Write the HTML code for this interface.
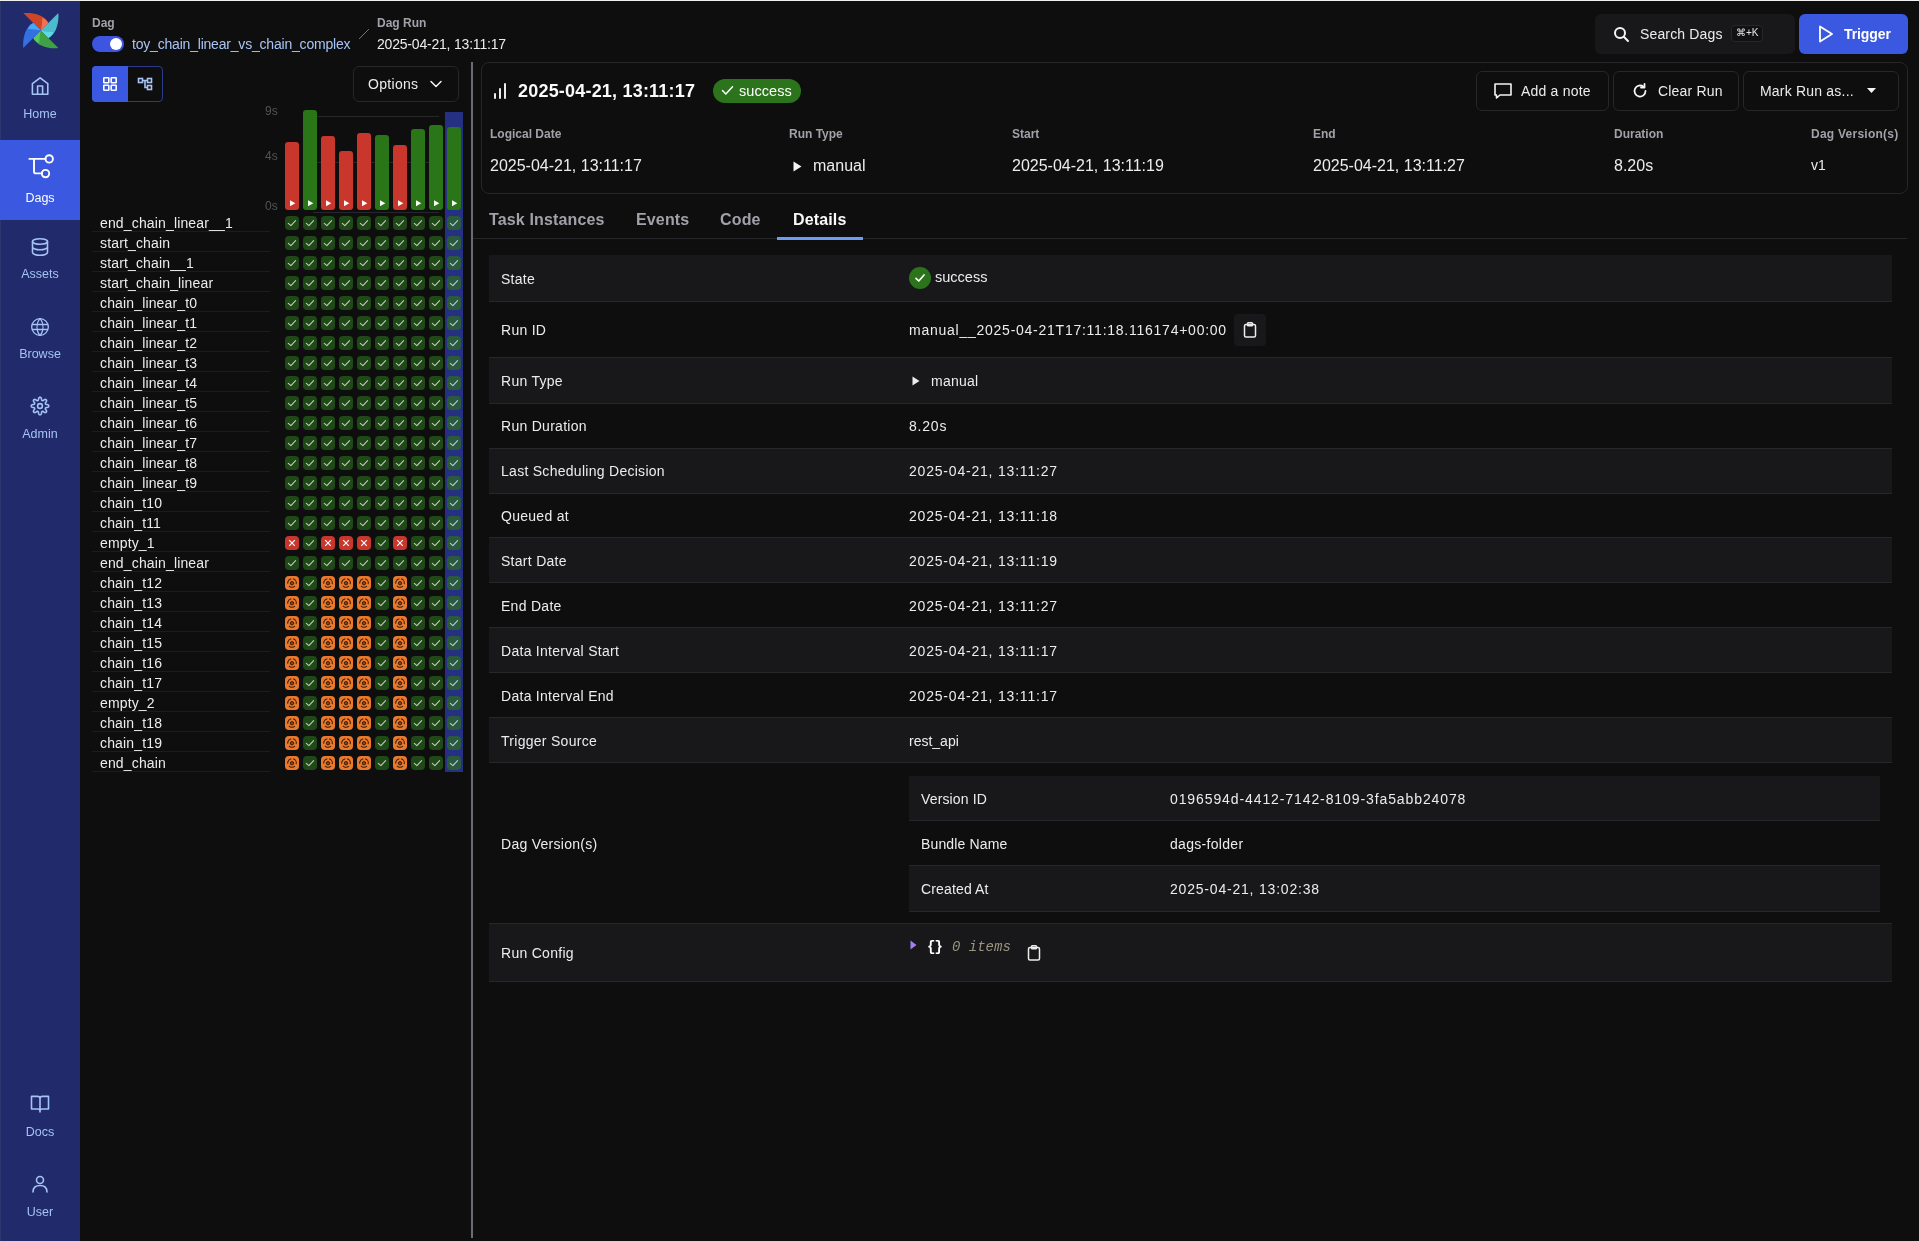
<!DOCTYPE html>
<html><head><meta charset="utf-8"><title>Airflow</title>
<style>
*{box-sizing:border-box;margin:0;padding:0}
html,body{width:1919px;height:1241px;overflow:hidden;background:#0e0e0e;font-family:"Liberation Sans",sans-serif;color:#ececed}
.a{position:absolute}
.t{position:absolute;white-space:nowrap;line-height:1}
svg{display:block}
</style></head><body>
<div id="root" style="position:absolute;left:0;top:0;width:1919px;height:1241px;will-change:transform;overflow:hidden">

<div class="a" style="left:0;top:0;width:80px;height:1241px;background:#212a6a"></div>
<div class="a" style="left:0;top:0;width:1px;height:1241px;background:#2e3670"></div>
<div class="a" style="left:23px;top:13px;width:36px;height:36px"><svg width="36" height="36" viewBox="0 0 36 36"><g transform="translate(17.8,17.5)"><g transform="rotate(0)"><path d="M-17.5,-17.5 C-9,-18.5 4.5,-15.5 7.4,-7.4 L0,0 Z" fill="#cf4526"/><path d="M1.5,-12.8 C4.5,-11.5 6.8,-9.5 7.4,-7.4 L0,0 Q1.5,-5 1.5,-12.8 Z" fill="#ef7352"/></g><g transform="rotate(90)"><path d="M-17.5,-17.5 C-9,-18.5 4.5,-15.5 7.4,-7.4 L0,0 Z" fill="#4bbccc"/><path d="M1.5,-12.8 C4.5,-11.5 6.8,-9.5 7.4,-7.4 L0,0 Q1.5,-5 1.5,-12.8 Z" fill="#5bd9e9"/></g><g transform="rotate(180)"><path d="M-17.5,-17.5 C-9,-18.5 4.5,-15.5 7.4,-7.4 L0,0 Z" fill="#3fa046"/><path d="M1.5,-12.8 C4.5,-11.5 6.8,-9.5 7.4,-7.4 L0,0 Q1.5,-5 1.5,-12.8 Z" fill="#53cb56"/></g><g transform="rotate(270)"><path d="M-17.5,-17.5 C-9,-18.5 4.5,-15.5 7.4,-7.4 L0,0 Z" fill="#3470e2"/><path d="M1.5,-12.8 C4.5,-11.5 6.8,-9.5 7.4,-7.4 L0,0 Q1.5,-5 1.5,-12.8 Z" fill="#48a8f6"/></g></g></svg></div>
<div class="a" style="left:0;top:140px;width:80px;height:80px;background:#3b58e0"></div>
<div class="a" style="left:30px;top:77px;width:20px;height:20px"><svg width="20" height="20" viewBox="0 0 20 20"><path d="M2.4,17.3 V6.6 L10.1,0.9 L17.8,6.6 V17.3 Z M7.6,17.3 V9 H12.6 V17.3" fill="none" stroke="#a5c3f5" stroke-width="1.6" stroke-linecap="round" stroke-linejoin="round" stroke-width="1.5"/></svg></div>
<div class="t" style="left:0;width:80px;text-align:center;top:108px;font-size:12.5px;color:#a5c3f5">Home</div>
<div class="a" style="left:26px;top:150px;width:30px;height:30px"><svg width="30" height="30" viewBox="0 0 30 30"><g fill="none" stroke="#fff" stroke-width="1.9" stroke-linecap="round"><path d="M3.4,8.9 H19.5 M8,8.9 V21.4 Q8,23.4 10,23.4 H15.8"/><circle cx="23.2" cy="8.9" r="3.7"/><circle cx="19.5" cy="23.6" r="3.7"/></g></svg></div>
<div class="t" style="left:0;width:80px;text-align:center;top:192px;font-size:12.5px;color:#fff">Dags</div>
<div class="a" style="left:30px;top:237px;width:20px;height:20px"><svg width="20" height="20" viewBox="0 0 20 20"><g fill="none" stroke="#a5c3f5" stroke-width="1.6" stroke-linecap="round" stroke-linejoin="round"><ellipse cx="10" cy="4.5" rx="7.5" ry="2.8"/><path d="M2.5,4.5 V15.5 C2.5,17 6,18.3 10,18.3 C14,18.3 17.5,17 17.5,15.5 V4.5 M2.5,10 C2.5,11.5 6,12.8 10,12.8 C14,12.8 17.5,11.5 17.5,10"/></g></svg></div>
<div class="t" style="left:0;width:80px;text-align:center;top:268px;font-size:12.5px;color:#a5c3f5">Assets</div>
<div class="a" style="left:30px;top:317px;width:20px;height:20px"><svg width="20" height="20" viewBox="0 0 24 24"><g fill="none" stroke="#a5c3f5" stroke-width="1.6" stroke-linecap="round" stroke-linejoin="round" stroke-width="1.9"><circle cx="12" cy="12" r="10"/><path d="M3,9 H21 M3,15 H21 M11.5,2 A18,18 0 0 0 11.5,22 M12.5,2 A18,18 0 0 1 12.5,22"/></g></svg></div>
<div class="t" style="left:0;width:80px;text-align:center;top:348px;font-size:12.5px;color:#a5c3f5">Browse</div>
<div class="a" style="left:30px;top:396px;width:20px;height:20px"><svg width="20" height="20" viewBox="0 0 20 20"><g fill="none" stroke="#a5c3f5" stroke-width="1.6" stroke-linecap="round" stroke-linejoin="round" stroke-width="1.5"><path d="M18.75,10.00 L18.73,10.29 L18.65,10.57 L18.50,10.84 L18.22,11.08 L17.76,11.28 L17.16,11.42 L16.56,11.53 L16.10,11.63 L15.80,11.76 L15.61,11.91 L15.49,12.07 L15.40,12.24 L15.34,12.42 L15.32,12.62 L15.34,12.86 L15.46,13.16 L15.72,13.55 L16.07,14.06 L16.40,14.58 L16.58,15.05 L16.60,15.42 L16.52,15.72 L16.37,15.97 L16.19,16.19 L15.97,16.37 L15.72,16.52 L15.42,16.60 L15.05,16.58 L14.58,16.40 L14.06,16.07 L13.55,15.72 L13.16,15.46 L12.86,15.34 L12.62,15.32 L12.42,15.34 L12.24,15.40 L12.07,15.49 L11.91,15.61 L11.76,15.80 L11.63,16.10 L11.53,16.56 L11.42,17.16 L11.28,17.76 L11.08,18.22 L10.84,18.50 L10.57,18.65 L10.29,18.73 L10.00,18.75 L9.71,18.73 L9.43,18.65 L9.16,18.50 L8.92,18.22 L8.72,17.76 L8.58,17.16 L8.47,16.56 L8.37,16.10 L8.24,15.80 L8.09,15.61 L7.93,15.49 L7.76,15.40 L7.58,15.34 L7.38,15.32 L7.14,15.34 L6.84,15.46 L6.45,15.72 L5.94,16.07 L5.42,16.40 L4.95,16.58 L4.58,16.60 L4.28,16.52 L4.03,16.37 L3.81,16.19 L3.63,15.97 L3.48,15.72 L3.40,15.42 L3.42,15.05 L3.60,14.58 L3.93,14.06 L4.28,13.55 L4.54,13.16 L4.66,12.86 L4.68,12.62 L4.66,12.42 L4.60,12.24 L4.51,12.07 L4.39,11.91 L4.20,11.76 L3.90,11.63 L3.44,11.53 L2.84,11.42 L2.24,11.28 L1.78,11.08 L1.50,10.84 L1.35,10.57 L1.27,10.29 L1.25,10.00 L1.27,9.71 L1.35,9.43 L1.50,9.16 L1.78,8.92 L2.24,8.72 L2.84,8.58 L3.44,8.47 L3.90,8.37 L4.20,8.24 L4.39,8.09 L4.51,7.93 L4.60,7.76 L4.66,7.58 L4.68,7.38 L4.66,7.14 L4.54,6.84 L4.28,6.45 L3.93,5.94 L3.60,5.42 L3.42,4.95 L3.40,4.58 L3.48,4.28 L3.63,4.03 L3.81,3.81 L4.03,3.63 L4.28,3.48 L4.58,3.40 L4.95,3.42 L5.42,3.60 L5.94,3.93 L6.45,4.28 L6.84,4.54 L7.14,4.66 L7.38,4.68 L7.58,4.66 L7.76,4.60 L7.93,4.51 L8.09,4.39 L8.24,4.20 L8.37,3.90 L8.47,3.44 L8.58,2.84 L8.72,2.24 L8.92,1.78 L9.16,1.50 L9.43,1.35 L9.71,1.27 L10.00,1.25 L10.29,1.27 L10.57,1.35 L10.84,1.50 L11.08,1.78 L11.28,2.24 L11.42,2.84 L11.53,3.44 L11.63,3.90 L11.76,4.20 L11.91,4.39 L12.07,4.51 L12.24,4.60 L12.42,4.66 L12.62,4.68 L12.86,4.66 L13.16,4.54 L13.55,4.28 L14.06,3.93 L14.58,3.60 L15.05,3.42 L15.42,3.40 L15.72,3.48 L15.97,3.63 L16.19,3.81 L16.37,4.03 L16.52,4.28 L16.60,4.58 L16.58,4.95 L16.40,5.42 L16.07,5.94 L15.72,6.45 L15.46,6.84 L15.34,7.14 L15.32,7.38 L15.34,7.58 L15.40,7.76 L15.49,7.93 L15.61,8.09 L15.80,8.24 L16.10,8.37 L16.56,8.47 L17.16,8.58 L17.76,8.72 L18.22,8.92 L18.50,9.16 L18.65,9.43 L18.73,9.71 Z"/><circle cx="10" cy="10" r="2.4"/></g></svg></div>
<div class="t" style="left:0;width:80px;text-align:center;top:428px;font-size:12.5px;color:#a5c3f5">Admin</div>
<div class="a" style="left:30px;top:1095px;width:20px;height:20px"><svg width="20" height="20" viewBox="0 0 20 20"><g fill="none" stroke="#a5c3f5" stroke-width="1.6" stroke-linecap="round" stroke-linejoin="round" stroke-width="1.5"><path d="M10,3.5 Q10,1.4 7.5,1.4 H1.5 V14 H8 Q10,14 10,16 M10,3.5 Q10,1.4 12.5,1.4 H18.5 V14 H12 Q10,14 10,16 M10,3.5 V17"/></g></svg></div>
<div class="t" style="left:0;width:80px;text-align:center;top:1126px;font-size:12.5px;color:#a5c3f5">Docs</div>
<div class="a" style="left:30px;top:1174px;width:20px;height:20px"><svg width="20" height="20" viewBox="0 0 20 20"><g fill="none" stroke="#a5c3f5" stroke-width="1.6" stroke-linecap="round" stroke-linejoin="round"><circle cx="10" cy="6" r="3.5"/><path d="M3,18 C3,13.5 6,11.5 10,11.5 C14,11.5 17,13.5 17,18"/></g></svg></div>
<div class="t" style="left:0;width:80px;text-align:center;top:1205.5px;font-size:12.5px;color:#a5c3f5">User</div>
<div class="t" style="left:92px;top:17px;font-size:12px;font-weight:700;color:#a1a1aa">Dag</div>
<div class="a" style="left:92px;top:36px;width:32px;height:16px;border-radius:8px;background:#3d55e0"></div>
<div class="a" style="left:110px;top:38px;width:12px;height:12px;border-radius:6px;background:#fff"></div>
<div class="t" style="left:132px;top:37px;font-size:14px;color:#a8c4f5;letter-spacing:-0.2px">toy_chain_linear_vs_chain_complex</div>
<svg class="a" style="left:357px;top:28px" width="14" height="12"><path d="M2,11 L12,1" stroke="#71717a" stroke-width="1"/></svg>
<div class="t" style="left:377px;top:17px;font-size:12px;font-weight:700;color:#a1a1aa">Dag Run</div>
<div class="t" style="left:377px;top:37px;font-size:14px;color:#ececed;letter-spacing:-0.2px">2025-04-21, 13:11:17</div>
<div class="a" style="left:1595px;top:14px;width:200px;height:40px;border-radius:6px;background:#18181b"></div>
<svg class="a" style="left:1613px;top:26px" width="17" height="17" viewBox="0 0 17 17"><g fill="none" stroke="#f4f4f5" stroke-width="2" stroke-linecap="round"><circle cx="7" cy="7" r="5"/><path d="M10.8,10.8 L15,15"/></g></svg>
<div class="t" style="left:1640px;top:27px;font-size:14px;font-weight:500;color:#ececed;letter-spacing:0.15px">Search Dags</div>
<div class="a" style="left:1731px;top:25px;width:32px;height:17px;border-radius:4px;border:1px solid #27272a;background:#111113"></div>
<div class="t" style="left:1736px;top:28px;font-size:10px;color:#e4e4e7">&#8984;+K</div>
<div class="a" style="left:1799px;top:14px;width:109px;height:40px;border-radius:6px;background:#3b58e0"></div>
<svg class="a" style="left:1817px;top:25px" width="18" height="18" viewBox="0 0 18 18"><path d="M3,1.5 L15,9 L3,16.5 Z" fill="none" stroke="#fff" stroke-width="1.8" stroke-linejoin="round"/></svg>
<div class="t" style="left:1844px;top:27px;font-size:14px;font-weight:700;color:#fff;letter-spacing:-0.1px">Trigger</div>
<div class="a" style="left:92px;top:66px;width:71px;height:36px;border-radius:4px;border:1px solid #2d3a8c"></div>
<div class="a" style="left:92px;top:66px;width:36px;height:36px;border-radius:4px 0 0 4px;background:#3b58e0"></div>
<svg class="a" style="left:102px;top:76px" width="16" height="16" viewBox="0 0 16 16"><g fill="none" stroke="#fff" stroke-width="1.6"><rect x="1.8" y="1.8" width="5" height="5" rx="0.5"/><rect x="9.2" y="1.8" width="5" height="5" rx="0.5"/><rect x="1.8" y="9.2" width="5" height="5" rx="0.5"/><rect x="9.2" y="9.2" width="5" height="5" rx="0.5"/></g></svg>
<svg class="a" style="left:137px;top:77px" width="16" height="14" viewBox="0 0 16 14"><g fill="none" stroke="#a8c4f5" stroke-width="1.6"><rect x="1.5" y="1.5" width="4" height="4"/><rect x="10.5" y="1.5" width="4" height="4"/><rect x="10.5" y="8.5" width="4" height="4"/><path d="M5.5,3.5 H10.5 M8,3.5 V10.5 H10.5"/></g></svg>
<div class="a" style="left:353px;top:66px;width:106px;height:36px;border-radius:6px;border:1px solid #27272a"></div>
<div class="t" style="left:368px;top:77px;font-size:14px;font-weight:500;color:#ececed;letter-spacing:0.3px">Options</div>
<svg class="a" style="left:429px;top:79px" width="14" height="10" viewBox="0 0 14 10"><path d="M2,2.5 L7,7.5 L12,2.5" fill="none" stroke="#f4f4f5" stroke-width="1.5" stroke-linecap="round" stroke-linejoin="round"/></svg>
<div class="t" style="left:265px;top:105px;font-size:12px;color:#52525b">9s</div>
<div class="t" style="left:265px;top:150px;font-size:12px;color:#52525b">4s</div>
<div class="t" style="left:265px;top:200px;font-size:12px;color:#52525b">0s</div>
<div class="a" style="left:313px;top:116px;width:126px;height:1px;background:#27272a"></div>
<div class="a" style="left:313px;top:162px;width:126px;height:1px;background:#27272a"></div>
<div class="a" style="left:313px;top:212px;width:126px;height:1px;background:#27272a"></div>
<div class="a" style="left:445px;top:112px;width:18px;height:660px;background:#253083"></div>
<div class="a" style="left:285px;top:142px;width:14px;height:68px;border-radius:3px;background:#c9372c"></div>
<svg class="a" style="left:290px;top:200px" width="6" height="7" viewBox="0 0 6 7"><path d="M0,0.3 L5.3,3.3 L0,6.3 Z" fill="#fff"/></svg>
<div class="a" style="left:303px;top:110px;width:14px;height:100px;border-radius:3px;background:#2b7519"></div>
<svg class="a" style="left:308px;top:200px" width="6" height="7" viewBox="0 0 6 7"><path d="M0,0.3 L5.3,3.3 L0,6.3 Z" fill="#fff"/></svg>
<div class="a" style="left:321px;top:136px;width:14px;height:74px;border-radius:3px;background:#c9372c"></div>
<svg class="a" style="left:326px;top:200px" width="6" height="7" viewBox="0 0 6 7"><path d="M0,0.3 L5.3,3.3 L0,6.3 Z" fill="#fff"/></svg>
<div class="a" style="left:339px;top:151px;width:14px;height:59px;border-radius:3px;background:#c9372c"></div>
<svg class="a" style="left:344px;top:200px" width="6" height="7" viewBox="0 0 6 7"><path d="M0,0.3 L5.3,3.3 L0,6.3 Z" fill="#fff"/></svg>
<div class="a" style="left:357px;top:133px;width:14px;height:77px;border-radius:3px;background:#c9372c"></div>
<svg class="a" style="left:362px;top:200px" width="6" height="7" viewBox="0 0 6 7"><path d="M0,0.3 L5.3,3.3 L0,6.3 Z" fill="#fff"/></svg>
<div class="a" style="left:375px;top:135px;width:14px;height:75px;border-radius:3px;background:#2b7519"></div>
<svg class="a" style="left:380px;top:200px" width="6" height="7" viewBox="0 0 6 7"><path d="M0,0.3 L5.3,3.3 L0,6.3 Z" fill="#fff"/></svg>
<div class="a" style="left:393px;top:145px;width:14px;height:65px;border-radius:3px;background:#c9372c"></div>
<svg class="a" style="left:398px;top:200px" width="6" height="7" viewBox="0 0 6 7"><path d="M0,0.3 L5.3,3.3 L0,6.3 Z" fill="#fff"/></svg>
<div class="a" style="left:411px;top:129px;width:14px;height:81px;border-radius:3px;background:#2b7519"></div>
<svg class="a" style="left:416px;top:200px" width="6" height="7" viewBox="0 0 6 7"><path d="M0,0.3 L5.3,3.3 L0,6.3 Z" fill="#fff"/></svg>
<div class="a" style="left:429px;top:125px;width:14px;height:85px;border-radius:3px;background:#2b7519"></div>
<svg class="a" style="left:434px;top:200px" width="6" height="7" viewBox="0 0 6 7"><path d="M0,0.3 L5.3,3.3 L0,6.3 Z" fill="#fff"/></svg>
<div class="a" style="left:447px;top:127px;width:14px;height:83px;border-radius:3px;background:#2b7519"></div>
<svg class="a" style="left:452px;top:200px" width="6" height="7" viewBox="0 0 6 7"><path d="M0,0.3 L5.3,3.3 L0,6.3 Z" fill="#fff"/></svg>
<div class="t" style="left:100px;top:216px;font-size:14px;color:#ececed;letter-spacing:0.15px">end_chain_linear__1</div>
<div class="a" style="left:92px;top:231px;width:178px;height:1px;background:#1c1c1f"></div>
<div class="a" style="left:285px;top:216px;width:14px;height:14px;border-radius:4px;background:#1f4a17"><svg width="14" height="14" viewBox="0 0 14 14"><path d="M3.3,7.3 L5.9,9.7 L10.6,4.6" fill="none" stroke="#c8c8c8" stroke-width="1.05" stroke-linecap="round" stroke-linejoin="round"/></svg></div>
<div class="a" style="left:303px;top:216px;width:14px;height:14px;border-radius:4px;background:#1f4a17"><svg width="14" height="14" viewBox="0 0 14 14"><path d="M3.3,7.3 L5.9,9.7 L10.6,4.6" fill="none" stroke="#c8c8c8" stroke-width="1.05" stroke-linecap="round" stroke-linejoin="round"/></svg></div>
<div class="a" style="left:321px;top:216px;width:14px;height:14px;border-radius:4px;background:#1f4a17"><svg width="14" height="14" viewBox="0 0 14 14"><path d="M3.3,7.3 L5.9,9.7 L10.6,4.6" fill="none" stroke="#c8c8c8" stroke-width="1.05" stroke-linecap="round" stroke-linejoin="round"/></svg></div>
<div class="a" style="left:339px;top:216px;width:14px;height:14px;border-radius:4px;background:#1f4a17"><svg width="14" height="14" viewBox="0 0 14 14"><path d="M3.3,7.3 L5.9,9.7 L10.6,4.6" fill="none" stroke="#c8c8c8" stroke-width="1.05" stroke-linecap="round" stroke-linejoin="round"/></svg></div>
<div class="a" style="left:357px;top:216px;width:14px;height:14px;border-radius:4px;background:#1f4a17"><svg width="14" height="14" viewBox="0 0 14 14"><path d="M3.3,7.3 L5.9,9.7 L10.6,4.6" fill="none" stroke="#c8c8c8" stroke-width="1.05" stroke-linecap="round" stroke-linejoin="round"/></svg></div>
<div class="a" style="left:375px;top:216px;width:14px;height:14px;border-radius:4px;background:#1f4a17"><svg width="14" height="14" viewBox="0 0 14 14"><path d="M3.3,7.3 L5.9,9.7 L10.6,4.6" fill="none" stroke="#c8c8c8" stroke-width="1.05" stroke-linecap="round" stroke-linejoin="round"/></svg></div>
<div class="a" style="left:393px;top:216px;width:14px;height:14px;border-radius:4px;background:#1f4a17"><svg width="14" height="14" viewBox="0 0 14 14"><path d="M3.3,7.3 L5.9,9.7 L10.6,4.6" fill="none" stroke="#c8c8c8" stroke-width="1.05" stroke-linecap="round" stroke-linejoin="round"/></svg></div>
<div class="a" style="left:411px;top:216px;width:14px;height:14px;border-radius:4px;background:#1f4a17"><svg width="14" height="14" viewBox="0 0 14 14"><path d="M3.3,7.3 L5.9,9.7 L10.6,4.6" fill="none" stroke="#c8c8c8" stroke-width="1.05" stroke-linecap="round" stroke-linejoin="round"/></svg></div>
<div class="a" style="left:429px;top:216px;width:14px;height:14px;border-radius:4px;background:#1f4a17"><svg width="14" height="14" viewBox="0 0 14 14"><path d="M3.3,7.3 L5.9,9.7 L10.6,4.6" fill="none" stroke="#c8c8c8" stroke-width="1.05" stroke-linecap="round" stroke-linejoin="round"/></svg></div>
<div class="a" style="left:447px;top:216px;width:14px;height:14px;border-radius:4px;background:#2a5a3d"><svg width="14" height="14" viewBox="0 0 14 14"><path d="M3.3,7.3 L5.9,9.7 L10.6,4.6" fill="none" stroke="#c4c8e8" stroke-width="1.05" stroke-linecap="round" stroke-linejoin="round"/></svg></div>
<div class="t" style="left:100px;top:236px;font-size:14px;color:#ececed;letter-spacing:0.15px">start_chain</div>
<div class="a" style="left:92px;top:251px;width:178px;height:1px;background:#1c1c1f"></div>
<div class="a" style="left:285px;top:236px;width:14px;height:14px;border-radius:4px;background:#1f4a17"><svg width="14" height="14" viewBox="0 0 14 14"><path d="M3.3,7.3 L5.9,9.7 L10.6,4.6" fill="none" stroke="#c8c8c8" stroke-width="1.05" stroke-linecap="round" stroke-linejoin="round"/></svg></div>
<div class="a" style="left:303px;top:236px;width:14px;height:14px;border-radius:4px;background:#1f4a17"><svg width="14" height="14" viewBox="0 0 14 14"><path d="M3.3,7.3 L5.9,9.7 L10.6,4.6" fill="none" stroke="#c8c8c8" stroke-width="1.05" stroke-linecap="round" stroke-linejoin="round"/></svg></div>
<div class="a" style="left:321px;top:236px;width:14px;height:14px;border-radius:4px;background:#1f4a17"><svg width="14" height="14" viewBox="0 0 14 14"><path d="M3.3,7.3 L5.9,9.7 L10.6,4.6" fill="none" stroke="#c8c8c8" stroke-width="1.05" stroke-linecap="round" stroke-linejoin="round"/></svg></div>
<div class="a" style="left:339px;top:236px;width:14px;height:14px;border-radius:4px;background:#1f4a17"><svg width="14" height="14" viewBox="0 0 14 14"><path d="M3.3,7.3 L5.9,9.7 L10.6,4.6" fill="none" stroke="#c8c8c8" stroke-width="1.05" stroke-linecap="round" stroke-linejoin="round"/></svg></div>
<div class="a" style="left:357px;top:236px;width:14px;height:14px;border-radius:4px;background:#1f4a17"><svg width="14" height="14" viewBox="0 0 14 14"><path d="M3.3,7.3 L5.9,9.7 L10.6,4.6" fill="none" stroke="#c8c8c8" stroke-width="1.05" stroke-linecap="round" stroke-linejoin="round"/></svg></div>
<div class="a" style="left:375px;top:236px;width:14px;height:14px;border-radius:4px;background:#1f4a17"><svg width="14" height="14" viewBox="0 0 14 14"><path d="M3.3,7.3 L5.9,9.7 L10.6,4.6" fill="none" stroke="#c8c8c8" stroke-width="1.05" stroke-linecap="round" stroke-linejoin="round"/></svg></div>
<div class="a" style="left:393px;top:236px;width:14px;height:14px;border-radius:4px;background:#1f4a17"><svg width="14" height="14" viewBox="0 0 14 14"><path d="M3.3,7.3 L5.9,9.7 L10.6,4.6" fill="none" stroke="#c8c8c8" stroke-width="1.05" stroke-linecap="round" stroke-linejoin="round"/></svg></div>
<div class="a" style="left:411px;top:236px;width:14px;height:14px;border-radius:4px;background:#1f4a17"><svg width="14" height="14" viewBox="0 0 14 14"><path d="M3.3,7.3 L5.9,9.7 L10.6,4.6" fill="none" stroke="#c8c8c8" stroke-width="1.05" stroke-linecap="round" stroke-linejoin="round"/></svg></div>
<div class="a" style="left:429px;top:236px;width:14px;height:14px;border-radius:4px;background:#1f4a17"><svg width="14" height="14" viewBox="0 0 14 14"><path d="M3.3,7.3 L5.9,9.7 L10.6,4.6" fill="none" stroke="#c8c8c8" stroke-width="1.05" stroke-linecap="round" stroke-linejoin="round"/></svg></div>
<div class="a" style="left:447px;top:236px;width:14px;height:14px;border-radius:4px;background:#2a5a3d"><svg width="14" height="14" viewBox="0 0 14 14"><path d="M3.3,7.3 L5.9,9.7 L10.6,4.6" fill="none" stroke="#c4c8e8" stroke-width="1.05" stroke-linecap="round" stroke-linejoin="round"/></svg></div>
<div class="t" style="left:100px;top:256px;font-size:14px;color:#ececed;letter-spacing:0.15px">start_chain__1</div>
<div class="a" style="left:92px;top:271px;width:178px;height:1px;background:#1c1c1f"></div>
<div class="a" style="left:285px;top:256px;width:14px;height:14px;border-radius:4px;background:#1f4a17"><svg width="14" height="14" viewBox="0 0 14 14"><path d="M3.3,7.3 L5.9,9.7 L10.6,4.6" fill="none" stroke="#c8c8c8" stroke-width="1.05" stroke-linecap="round" stroke-linejoin="round"/></svg></div>
<div class="a" style="left:303px;top:256px;width:14px;height:14px;border-radius:4px;background:#1f4a17"><svg width="14" height="14" viewBox="0 0 14 14"><path d="M3.3,7.3 L5.9,9.7 L10.6,4.6" fill="none" stroke="#c8c8c8" stroke-width="1.05" stroke-linecap="round" stroke-linejoin="round"/></svg></div>
<div class="a" style="left:321px;top:256px;width:14px;height:14px;border-radius:4px;background:#1f4a17"><svg width="14" height="14" viewBox="0 0 14 14"><path d="M3.3,7.3 L5.9,9.7 L10.6,4.6" fill="none" stroke="#c8c8c8" stroke-width="1.05" stroke-linecap="round" stroke-linejoin="round"/></svg></div>
<div class="a" style="left:339px;top:256px;width:14px;height:14px;border-radius:4px;background:#1f4a17"><svg width="14" height="14" viewBox="0 0 14 14"><path d="M3.3,7.3 L5.9,9.7 L10.6,4.6" fill="none" stroke="#c8c8c8" stroke-width="1.05" stroke-linecap="round" stroke-linejoin="round"/></svg></div>
<div class="a" style="left:357px;top:256px;width:14px;height:14px;border-radius:4px;background:#1f4a17"><svg width="14" height="14" viewBox="0 0 14 14"><path d="M3.3,7.3 L5.9,9.7 L10.6,4.6" fill="none" stroke="#c8c8c8" stroke-width="1.05" stroke-linecap="round" stroke-linejoin="round"/></svg></div>
<div class="a" style="left:375px;top:256px;width:14px;height:14px;border-radius:4px;background:#1f4a17"><svg width="14" height="14" viewBox="0 0 14 14"><path d="M3.3,7.3 L5.9,9.7 L10.6,4.6" fill="none" stroke="#c8c8c8" stroke-width="1.05" stroke-linecap="round" stroke-linejoin="round"/></svg></div>
<div class="a" style="left:393px;top:256px;width:14px;height:14px;border-radius:4px;background:#1f4a17"><svg width="14" height="14" viewBox="0 0 14 14"><path d="M3.3,7.3 L5.9,9.7 L10.6,4.6" fill="none" stroke="#c8c8c8" stroke-width="1.05" stroke-linecap="round" stroke-linejoin="round"/></svg></div>
<div class="a" style="left:411px;top:256px;width:14px;height:14px;border-radius:4px;background:#1f4a17"><svg width="14" height="14" viewBox="0 0 14 14"><path d="M3.3,7.3 L5.9,9.7 L10.6,4.6" fill="none" stroke="#c8c8c8" stroke-width="1.05" stroke-linecap="round" stroke-linejoin="round"/></svg></div>
<div class="a" style="left:429px;top:256px;width:14px;height:14px;border-radius:4px;background:#1f4a17"><svg width="14" height="14" viewBox="0 0 14 14"><path d="M3.3,7.3 L5.9,9.7 L10.6,4.6" fill="none" stroke="#c8c8c8" stroke-width="1.05" stroke-linecap="round" stroke-linejoin="round"/></svg></div>
<div class="a" style="left:447px;top:256px;width:14px;height:14px;border-radius:4px;background:#2a5a3d"><svg width="14" height="14" viewBox="0 0 14 14"><path d="M3.3,7.3 L5.9,9.7 L10.6,4.6" fill="none" stroke="#c4c8e8" stroke-width="1.05" stroke-linecap="round" stroke-linejoin="round"/></svg></div>
<div class="t" style="left:100px;top:276px;font-size:14px;color:#ececed;letter-spacing:0.15px">start_chain_linear</div>
<div class="a" style="left:92px;top:291px;width:178px;height:1px;background:#1c1c1f"></div>
<div class="a" style="left:285px;top:276px;width:14px;height:14px;border-radius:4px;background:#1f4a17"><svg width="14" height="14" viewBox="0 0 14 14"><path d="M3.3,7.3 L5.9,9.7 L10.6,4.6" fill="none" stroke="#c8c8c8" stroke-width="1.05" stroke-linecap="round" stroke-linejoin="round"/></svg></div>
<div class="a" style="left:303px;top:276px;width:14px;height:14px;border-radius:4px;background:#1f4a17"><svg width="14" height="14" viewBox="0 0 14 14"><path d="M3.3,7.3 L5.9,9.7 L10.6,4.6" fill="none" stroke="#c8c8c8" stroke-width="1.05" stroke-linecap="round" stroke-linejoin="round"/></svg></div>
<div class="a" style="left:321px;top:276px;width:14px;height:14px;border-radius:4px;background:#1f4a17"><svg width="14" height="14" viewBox="0 0 14 14"><path d="M3.3,7.3 L5.9,9.7 L10.6,4.6" fill="none" stroke="#c8c8c8" stroke-width="1.05" stroke-linecap="round" stroke-linejoin="round"/></svg></div>
<div class="a" style="left:339px;top:276px;width:14px;height:14px;border-radius:4px;background:#1f4a17"><svg width="14" height="14" viewBox="0 0 14 14"><path d="M3.3,7.3 L5.9,9.7 L10.6,4.6" fill="none" stroke="#c8c8c8" stroke-width="1.05" stroke-linecap="round" stroke-linejoin="round"/></svg></div>
<div class="a" style="left:357px;top:276px;width:14px;height:14px;border-radius:4px;background:#1f4a17"><svg width="14" height="14" viewBox="0 0 14 14"><path d="M3.3,7.3 L5.9,9.7 L10.6,4.6" fill="none" stroke="#c8c8c8" stroke-width="1.05" stroke-linecap="round" stroke-linejoin="round"/></svg></div>
<div class="a" style="left:375px;top:276px;width:14px;height:14px;border-radius:4px;background:#1f4a17"><svg width="14" height="14" viewBox="0 0 14 14"><path d="M3.3,7.3 L5.9,9.7 L10.6,4.6" fill="none" stroke="#c8c8c8" stroke-width="1.05" stroke-linecap="round" stroke-linejoin="round"/></svg></div>
<div class="a" style="left:393px;top:276px;width:14px;height:14px;border-radius:4px;background:#1f4a17"><svg width="14" height="14" viewBox="0 0 14 14"><path d="M3.3,7.3 L5.9,9.7 L10.6,4.6" fill="none" stroke="#c8c8c8" stroke-width="1.05" stroke-linecap="round" stroke-linejoin="round"/></svg></div>
<div class="a" style="left:411px;top:276px;width:14px;height:14px;border-radius:4px;background:#1f4a17"><svg width="14" height="14" viewBox="0 0 14 14"><path d="M3.3,7.3 L5.9,9.7 L10.6,4.6" fill="none" stroke="#c8c8c8" stroke-width="1.05" stroke-linecap="round" stroke-linejoin="round"/></svg></div>
<div class="a" style="left:429px;top:276px;width:14px;height:14px;border-radius:4px;background:#1f4a17"><svg width="14" height="14" viewBox="0 0 14 14"><path d="M3.3,7.3 L5.9,9.7 L10.6,4.6" fill="none" stroke="#c8c8c8" stroke-width="1.05" stroke-linecap="round" stroke-linejoin="round"/></svg></div>
<div class="a" style="left:447px;top:276px;width:14px;height:14px;border-radius:4px;background:#2a5a3d"><svg width="14" height="14" viewBox="0 0 14 14"><path d="M3.3,7.3 L5.9,9.7 L10.6,4.6" fill="none" stroke="#c4c8e8" stroke-width="1.05" stroke-linecap="round" stroke-linejoin="round"/></svg></div>
<div class="t" style="left:100px;top:296px;font-size:14px;color:#ececed;letter-spacing:0.15px">chain_linear_t0</div>
<div class="a" style="left:92px;top:311px;width:178px;height:1px;background:#1c1c1f"></div>
<div class="a" style="left:285px;top:296px;width:14px;height:14px;border-radius:4px;background:#1f4a17"><svg width="14" height="14" viewBox="0 0 14 14"><path d="M3.3,7.3 L5.9,9.7 L10.6,4.6" fill="none" stroke="#c8c8c8" stroke-width="1.05" stroke-linecap="round" stroke-linejoin="round"/></svg></div>
<div class="a" style="left:303px;top:296px;width:14px;height:14px;border-radius:4px;background:#1f4a17"><svg width="14" height="14" viewBox="0 0 14 14"><path d="M3.3,7.3 L5.9,9.7 L10.6,4.6" fill="none" stroke="#c8c8c8" stroke-width="1.05" stroke-linecap="round" stroke-linejoin="round"/></svg></div>
<div class="a" style="left:321px;top:296px;width:14px;height:14px;border-radius:4px;background:#1f4a17"><svg width="14" height="14" viewBox="0 0 14 14"><path d="M3.3,7.3 L5.9,9.7 L10.6,4.6" fill="none" stroke="#c8c8c8" stroke-width="1.05" stroke-linecap="round" stroke-linejoin="round"/></svg></div>
<div class="a" style="left:339px;top:296px;width:14px;height:14px;border-radius:4px;background:#1f4a17"><svg width="14" height="14" viewBox="0 0 14 14"><path d="M3.3,7.3 L5.9,9.7 L10.6,4.6" fill="none" stroke="#c8c8c8" stroke-width="1.05" stroke-linecap="round" stroke-linejoin="round"/></svg></div>
<div class="a" style="left:357px;top:296px;width:14px;height:14px;border-radius:4px;background:#1f4a17"><svg width="14" height="14" viewBox="0 0 14 14"><path d="M3.3,7.3 L5.9,9.7 L10.6,4.6" fill="none" stroke="#c8c8c8" stroke-width="1.05" stroke-linecap="round" stroke-linejoin="round"/></svg></div>
<div class="a" style="left:375px;top:296px;width:14px;height:14px;border-radius:4px;background:#1f4a17"><svg width="14" height="14" viewBox="0 0 14 14"><path d="M3.3,7.3 L5.9,9.7 L10.6,4.6" fill="none" stroke="#c8c8c8" stroke-width="1.05" stroke-linecap="round" stroke-linejoin="round"/></svg></div>
<div class="a" style="left:393px;top:296px;width:14px;height:14px;border-radius:4px;background:#1f4a17"><svg width="14" height="14" viewBox="0 0 14 14"><path d="M3.3,7.3 L5.9,9.7 L10.6,4.6" fill="none" stroke="#c8c8c8" stroke-width="1.05" stroke-linecap="round" stroke-linejoin="round"/></svg></div>
<div class="a" style="left:411px;top:296px;width:14px;height:14px;border-radius:4px;background:#1f4a17"><svg width="14" height="14" viewBox="0 0 14 14"><path d="M3.3,7.3 L5.9,9.7 L10.6,4.6" fill="none" stroke="#c8c8c8" stroke-width="1.05" stroke-linecap="round" stroke-linejoin="round"/></svg></div>
<div class="a" style="left:429px;top:296px;width:14px;height:14px;border-radius:4px;background:#1f4a17"><svg width="14" height="14" viewBox="0 0 14 14"><path d="M3.3,7.3 L5.9,9.7 L10.6,4.6" fill="none" stroke="#c8c8c8" stroke-width="1.05" stroke-linecap="round" stroke-linejoin="round"/></svg></div>
<div class="a" style="left:447px;top:296px;width:14px;height:14px;border-radius:4px;background:#2a5a3d"><svg width="14" height="14" viewBox="0 0 14 14"><path d="M3.3,7.3 L5.9,9.7 L10.6,4.6" fill="none" stroke="#c4c8e8" stroke-width="1.05" stroke-linecap="round" stroke-linejoin="round"/></svg></div>
<div class="t" style="left:100px;top:316px;font-size:14px;color:#ececed;letter-spacing:0.15px">chain_linear_t1</div>
<div class="a" style="left:92px;top:331px;width:178px;height:1px;background:#1c1c1f"></div>
<div class="a" style="left:285px;top:316px;width:14px;height:14px;border-radius:4px;background:#1f4a17"><svg width="14" height="14" viewBox="0 0 14 14"><path d="M3.3,7.3 L5.9,9.7 L10.6,4.6" fill="none" stroke="#c8c8c8" stroke-width="1.05" stroke-linecap="round" stroke-linejoin="round"/></svg></div>
<div class="a" style="left:303px;top:316px;width:14px;height:14px;border-radius:4px;background:#1f4a17"><svg width="14" height="14" viewBox="0 0 14 14"><path d="M3.3,7.3 L5.9,9.7 L10.6,4.6" fill="none" stroke="#c8c8c8" stroke-width="1.05" stroke-linecap="round" stroke-linejoin="round"/></svg></div>
<div class="a" style="left:321px;top:316px;width:14px;height:14px;border-radius:4px;background:#1f4a17"><svg width="14" height="14" viewBox="0 0 14 14"><path d="M3.3,7.3 L5.9,9.7 L10.6,4.6" fill="none" stroke="#c8c8c8" stroke-width="1.05" stroke-linecap="round" stroke-linejoin="round"/></svg></div>
<div class="a" style="left:339px;top:316px;width:14px;height:14px;border-radius:4px;background:#1f4a17"><svg width="14" height="14" viewBox="0 0 14 14"><path d="M3.3,7.3 L5.9,9.7 L10.6,4.6" fill="none" stroke="#c8c8c8" stroke-width="1.05" stroke-linecap="round" stroke-linejoin="round"/></svg></div>
<div class="a" style="left:357px;top:316px;width:14px;height:14px;border-radius:4px;background:#1f4a17"><svg width="14" height="14" viewBox="0 0 14 14"><path d="M3.3,7.3 L5.9,9.7 L10.6,4.6" fill="none" stroke="#c8c8c8" stroke-width="1.05" stroke-linecap="round" stroke-linejoin="round"/></svg></div>
<div class="a" style="left:375px;top:316px;width:14px;height:14px;border-radius:4px;background:#1f4a17"><svg width="14" height="14" viewBox="0 0 14 14"><path d="M3.3,7.3 L5.9,9.7 L10.6,4.6" fill="none" stroke="#c8c8c8" stroke-width="1.05" stroke-linecap="round" stroke-linejoin="round"/></svg></div>
<div class="a" style="left:393px;top:316px;width:14px;height:14px;border-radius:4px;background:#1f4a17"><svg width="14" height="14" viewBox="0 0 14 14"><path d="M3.3,7.3 L5.9,9.7 L10.6,4.6" fill="none" stroke="#c8c8c8" stroke-width="1.05" stroke-linecap="round" stroke-linejoin="round"/></svg></div>
<div class="a" style="left:411px;top:316px;width:14px;height:14px;border-radius:4px;background:#1f4a17"><svg width="14" height="14" viewBox="0 0 14 14"><path d="M3.3,7.3 L5.9,9.7 L10.6,4.6" fill="none" stroke="#c8c8c8" stroke-width="1.05" stroke-linecap="round" stroke-linejoin="round"/></svg></div>
<div class="a" style="left:429px;top:316px;width:14px;height:14px;border-radius:4px;background:#1f4a17"><svg width="14" height="14" viewBox="0 0 14 14"><path d="M3.3,7.3 L5.9,9.7 L10.6,4.6" fill="none" stroke="#c8c8c8" stroke-width="1.05" stroke-linecap="round" stroke-linejoin="round"/></svg></div>
<div class="a" style="left:447px;top:316px;width:14px;height:14px;border-radius:4px;background:#2a5a3d"><svg width="14" height="14" viewBox="0 0 14 14"><path d="M3.3,7.3 L5.9,9.7 L10.6,4.6" fill="none" stroke="#c4c8e8" stroke-width="1.05" stroke-linecap="round" stroke-linejoin="round"/></svg></div>
<div class="t" style="left:100px;top:336px;font-size:14px;color:#ececed;letter-spacing:0.15px">chain_linear_t2</div>
<div class="a" style="left:92px;top:351px;width:178px;height:1px;background:#1c1c1f"></div>
<div class="a" style="left:285px;top:336px;width:14px;height:14px;border-radius:4px;background:#1f4a17"><svg width="14" height="14" viewBox="0 0 14 14"><path d="M3.3,7.3 L5.9,9.7 L10.6,4.6" fill="none" stroke="#c8c8c8" stroke-width="1.05" stroke-linecap="round" stroke-linejoin="round"/></svg></div>
<div class="a" style="left:303px;top:336px;width:14px;height:14px;border-radius:4px;background:#1f4a17"><svg width="14" height="14" viewBox="0 0 14 14"><path d="M3.3,7.3 L5.9,9.7 L10.6,4.6" fill="none" stroke="#c8c8c8" stroke-width="1.05" stroke-linecap="round" stroke-linejoin="round"/></svg></div>
<div class="a" style="left:321px;top:336px;width:14px;height:14px;border-radius:4px;background:#1f4a17"><svg width="14" height="14" viewBox="0 0 14 14"><path d="M3.3,7.3 L5.9,9.7 L10.6,4.6" fill="none" stroke="#c8c8c8" stroke-width="1.05" stroke-linecap="round" stroke-linejoin="round"/></svg></div>
<div class="a" style="left:339px;top:336px;width:14px;height:14px;border-radius:4px;background:#1f4a17"><svg width="14" height="14" viewBox="0 0 14 14"><path d="M3.3,7.3 L5.9,9.7 L10.6,4.6" fill="none" stroke="#c8c8c8" stroke-width="1.05" stroke-linecap="round" stroke-linejoin="round"/></svg></div>
<div class="a" style="left:357px;top:336px;width:14px;height:14px;border-radius:4px;background:#1f4a17"><svg width="14" height="14" viewBox="0 0 14 14"><path d="M3.3,7.3 L5.9,9.7 L10.6,4.6" fill="none" stroke="#c8c8c8" stroke-width="1.05" stroke-linecap="round" stroke-linejoin="round"/></svg></div>
<div class="a" style="left:375px;top:336px;width:14px;height:14px;border-radius:4px;background:#1f4a17"><svg width="14" height="14" viewBox="0 0 14 14"><path d="M3.3,7.3 L5.9,9.7 L10.6,4.6" fill="none" stroke="#c8c8c8" stroke-width="1.05" stroke-linecap="round" stroke-linejoin="round"/></svg></div>
<div class="a" style="left:393px;top:336px;width:14px;height:14px;border-radius:4px;background:#1f4a17"><svg width="14" height="14" viewBox="0 0 14 14"><path d="M3.3,7.3 L5.9,9.7 L10.6,4.6" fill="none" stroke="#c8c8c8" stroke-width="1.05" stroke-linecap="round" stroke-linejoin="round"/></svg></div>
<div class="a" style="left:411px;top:336px;width:14px;height:14px;border-radius:4px;background:#1f4a17"><svg width="14" height="14" viewBox="0 0 14 14"><path d="M3.3,7.3 L5.9,9.7 L10.6,4.6" fill="none" stroke="#c8c8c8" stroke-width="1.05" stroke-linecap="round" stroke-linejoin="round"/></svg></div>
<div class="a" style="left:429px;top:336px;width:14px;height:14px;border-radius:4px;background:#1f4a17"><svg width="14" height="14" viewBox="0 0 14 14"><path d="M3.3,7.3 L5.9,9.7 L10.6,4.6" fill="none" stroke="#c8c8c8" stroke-width="1.05" stroke-linecap="round" stroke-linejoin="round"/></svg></div>
<div class="a" style="left:447px;top:336px;width:14px;height:14px;border-radius:4px;background:#2a5a3d"><svg width="14" height="14" viewBox="0 0 14 14"><path d="M3.3,7.3 L5.9,9.7 L10.6,4.6" fill="none" stroke="#c4c8e8" stroke-width="1.05" stroke-linecap="round" stroke-linejoin="round"/></svg></div>
<div class="t" style="left:100px;top:356px;font-size:14px;color:#ececed;letter-spacing:0.15px">chain_linear_t3</div>
<div class="a" style="left:92px;top:371px;width:178px;height:1px;background:#1c1c1f"></div>
<div class="a" style="left:285px;top:356px;width:14px;height:14px;border-radius:4px;background:#1f4a17"><svg width="14" height="14" viewBox="0 0 14 14"><path d="M3.3,7.3 L5.9,9.7 L10.6,4.6" fill="none" stroke="#c8c8c8" stroke-width="1.05" stroke-linecap="round" stroke-linejoin="round"/></svg></div>
<div class="a" style="left:303px;top:356px;width:14px;height:14px;border-radius:4px;background:#1f4a17"><svg width="14" height="14" viewBox="0 0 14 14"><path d="M3.3,7.3 L5.9,9.7 L10.6,4.6" fill="none" stroke="#c8c8c8" stroke-width="1.05" stroke-linecap="round" stroke-linejoin="round"/></svg></div>
<div class="a" style="left:321px;top:356px;width:14px;height:14px;border-radius:4px;background:#1f4a17"><svg width="14" height="14" viewBox="0 0 14 14"><path d="M3.3,7.3 L5.9,9.7 L10.6,4.6" fill="none" stroke="#c8c8c8" stroke-width="1.05" stroke-linecap="round" stroke-linejoin="round"/></svg></div>
<div class="a" style="left:339px;top:356px;width:14px;height:14px;border-radius:4px;background:#1f4a17"><svg width="14" height="14" viewBox="0 0 14 14"><path d="M3.3,7.3 L5.9,9.7 L10.6,4.6" fill="none" stroke="#c8c8c8" stroke-width="1.05" stroke-linecap="round" stroke-linejoin="round"/></svg></div>
<div class="a" style="left:357px;top:356px;width:14px;height:14px;border-radius:4px;background:#1f4a17"><svg width="14" height="14" viewBox="0 0 14 14"><path d="M3.3,7.3 L5.9,9.7 L10.6,4.6" fill="none" stroke="#c8c8c8" stroke-width="1.05" stroke-linecap="round" stroke-linejoin="round"/></svg></div>
<div class="a" style="left:375px;top:356px;width:14px;height:14px;border-radius:4px;background:#1f4a17"><svg width="14" height="14" viewBox="0 0 14 14"><path d="M3.3,7.3 L5.9,9.7 L10.6,4.6" fill="none" stroke="#c8c8c8" stroke-width="1.05" stroke-linecap="round" stroke-linejoin="round"/></svg></div>
<div class="a" style="left:393px;top:356px;width:14px;height:14px;border-radius:4px;background:#1f4a17"><svg width="14" height="14" viewBox="0 0 14 14"><path d="M3.3,7.3 L5.9,9.7 L10.6,4.6" fill="none" stroke="#c8c8c8" stroke-width="1.05" stroke-linecap="round" stroke-linejoin="round"/></svg></div>
<div class="a" style="left:411px;top:356px;width:14px;height:14px;border-radius:4px;background:#1f4a17"><svg width="14" height="14" viewBox="0 0 14 14"><path d="M3.3,7.3 L5.9,9.7 L10.6,4.6" fill="none" stroke="#c8c8c8" stroke-width="1.05" stroke-linecap="round" stroke-linejoin="round"/></svg></div>
<div class="a" style="left:429px;top:356px;width:14px;height:14px;border-radius:4px;background:#1f4a17"><svg width="14" height="14" viewBox="0 0 14 14"><path d="M3.3,7.3 L5.9,9.7 L10.6,4.6" fill="none" stroke="#c8c8c8" stroke-width="1.05" stroke-linecap="round" stroke-linejoin="round"/></svg></div>
<div class="a" style="left:447px;top:356px;width:14px;height:14px;border-radius:4px;background:#2a5a3d"><svg width="14" height="14" viewBox="0 0 14 14"><path d="M3.3,7.3 L5.9,9.7 L10.6,4.6" fill="none" stroke="#c4c8e8" stroke-width="1.05" stroke-linecap="round" stroke-linejoin="round"/></svg></div>
<div class="t" style="left:100px;top:376px;font-size:14px;color:#ececed;letter-spacing:0.15px">chain_linear_t4</div>
<div class="a" style="left:92px;top:391px;width:178px;height:1px;background:#1c1c1f"></div>
<div class="a" style="left:285px;top:376px;width:14px;height:14px;border-radius:4px;background:#1f4a17"><svg width="14" height="14" viewBox="0 0 14 14"><path d="M3.3,7.3 L5.9,9.7 L10.6,4.6" fill="none" stroke="#c8c8c8" stroke-width="1.05" stroke-linecap="round" stroke-linejoin="round"/></svg></div>
<div class="a" style="left:303px;top:376px;width:14px;height:14px;border-radius:4px;background:#1f4a17"><svg width="14" height="14" viewBox="0 0 14 14"><path d="M3.3,7.3 L5.9,9.7 L10.6,4.6" fill="none" stroke="#c8c8c8" stroke-width="1.05" stroke-linecap="round" stroke-linejoin="round"/></svg></div>
<div class="a" style="left:321px;top:376px;width:14px;height:14px;border-radius:4px;background:#1f4a17"><svg width="14" height="14" viewBox="0 0 14 14"><path d="M3.3,7.3 L5.9,9.7 L10.6,4.6" fill="none" stroke="#c8c8c8" stroke-width="1.05" stroke-linecap="round" stroke-linejoin="round"/></svg></div>
<div class="a" style="left:339px;top:376px;width:14px;height:14px;border-radius:4px;background:#1f4a17"><svg width="14" height="14" viewBox="0 0 14 14"><path d="M3.3,7.3 L5.9,9.7 L10.6,4.6" fill="none" stroke="#c8c8c8" stroke-width="1.05" stroke-linecap="round" stroke-linejoin="round"/></svg></div>
<div class="a" style="left:357px;top:376px;width:14px;height:14px;border-radius:4px;background:#1f4a17"><svg width="14" height="14" viewBox="0 0 14 14"><path d="M3.3,7.3 L5.9,9.7 L10.6,4.6" fill="none" stroke="#c8c8c8" stroke-width="1.05" stroke-linecap="round" stroke-linejoin="round"/></svg></div>
<div class="a" style="left:375px;top:376px;width:14px;height:14px;border-radius:4px;background:#1f4a17"><svg width="14" height="14" viewBox="0 0 14 14"><path d="M3.3,7.3 L5.9,9.7 L10.6,4.6" fill="none" stroke="#c8c8c8" stroke-width="1.05" stroke-linecap="round" stroke-linejoin="round"/></svg></div>
<div class="a" style="left:393px;top:376px;width:14px;height:14px;border-radius:4px;background:#1f4a17"><svg width="14" height="14" viewBox="0 0 14 14"><path d="M3.3,7.3 L5.9,9.7 L10.6,4.6" fill="none" stroke="#c8c8c8" stroke-width="1.05" stroke-linecap="round" stroke-linejoin="round"/></svg></div>
<div class="a" style="left:411px;top:376px;width:14px;height:14px;border-radius:4px;background:#1f4a17"><svg width="14" height="14" viewBox="0 0 14 14"><path d="M3.3,7.3 L5.9,9.7 L10.6,4.6" fill="none" stroke="#c8c8c8" stroke-width="1.05" stroke-linecap="round" stroke-linejoin="round"/></svg></div>
<div class="a" style="left:429px;top:376px;width:14px;height:14px;border-radius:4px;background:#1f4a17"><svg width="14" height="14" viewBox="0 0 14 14"><path d="M3.3,7.3 L5.9,9.7 L10.6,4.6" fill="none" stroke="#c8c8c8" stroke-width="1.05" stroke-linecap="round" stroke-linejoin="round"/></svg></div>
<div class="a" style="left:447px;top:376px;width:14px;height:14px;border-radius:4px;background:#2a5a3d"><svg width="14" height="14" viewBox="0 0 14 14"><path d="M3.3,7.3 L5.9,9.7 L10.6,4.6" fill="none" stroke="#c4c8e8" stroke-width="1.05" stroke-linecap="round" stroke-linejoin="round"/></svg></div>
<div class="t" style="left:100px;top:396px;font-size:14px;color:#ececed;letter-spacing:0.15px">chain_linear_t5</div>
<div class="a" style="left:92px;top:411px;width:178px;height:1px;background:#1c1c1f"></div>
<div class="a" style="left:285px;top:396px;width:14px;height:14px;border-radius:4px;background:#1f4a17"><svg width="14" height="14" viewBox="0 0 14 14"><path d="M3.3,7.3 L5.9,9.7 L10.6,4.6" fill="none" stroke="#c8c8c8" stroke-width="1.05" stroke-linecap="round" stroke-linejoin="round"/></svg></div>
<div class="a" style="left:303px;top:396px;width:14px;height:14px;border-radius:4px;background:#1f4a17"><svg width="14" height="14" viewBox="0 0 14 14"><path d="M3.3,7.3 L5.9,9.7 L10.6,4.6" fill="none" stroke="#c8c8c8" stroke-width="1.05" stroke-linecap="round" stroke-linejoin="round"/></svg></div>
<div class="a" style="left:321px;top:396px;width:14px;height:14px;border-radius:4px;background:#1f4a17"><svg width="14" height="14" viewBox="0 0 14 14"><path d="M3.3,7.3 L5.9,9.7 L10.6,4.6" fill="none" stroke="#c8c8c8" stroke-width="1.05" stroke-linecap="round" stroke-linejoin="round"/></svg></div>
<div class="a" style="left:339px;top:396px;width:14px;height:14px;border-radius:4px;background:#1f4a17"><svg width="14" height="14" viewBox="0 0 14 14"><path d="M3.3,7.3 L5.9,9.7 L10.6,4.6" fill="none" stroke="#c8c8c8" stroke-width="1.05" stroke-linecap="round" stroke-linejoin="round"/></svg></div>
<div class="a" style="left:357px;top:396px;width:14px;height:14px;border-radius:4px;background:#1f4a17"><svg width="14" height="14" viewBox="0 0 14 14"><path d="M3.3,7.3 L5.9,9.7 L10.6,4.6" fill="none" stroke="#c8c8c8" stroke-width="1.05" stroke-linecap="round" stroke-linejoin="round"/></svg></div>
<div class="a" style="left:375px;top:396px;width:14px;height:14px;border-radius:4px;background:#1f4a17"><svg width="14" height="14" viewBox="0 0 14 14"><path d="M3.3,7.3 L5.9,9.7 L10.6,4.6" fill="none" stroke="#c8c8c8" stroke-width="1.05" stroke-linecap="round" stroke-linejoin="round"/></svg></div>
<div class="a" style="left:393px;top:396px;width:14px;height:14px;border-radius:4px;background:#1f4a17"><svg width="14" height="14" viewBox="0 0 14 14"><path d="M3.3,7.3 L5.9,9.7 L10.6,4.6" fill="none" stroke="#c8c8c8" stroke-width="1.05" stroke-linecap="round" stroke-linejoin="round"/></svg></div>
<div class="a" style="left:411px;top:396px;width:14px;height:14px;border-radius:4px;background:#1f4a17"><svg width="14" height="14" viewBox="0 0 14 14"><path d="M3.3,7.3 L5.9,9.7 L10.6,4.6" fill="none" stroke="#c8c8c8" stroke-width="1.05" stroke-linecap="round" stroke-linejoin="round"/></svg></div>
<div class="a" style="left:429px;top:396px;width:14px;height:14px;border-radius:4px;background:#1f4a17"><svg width="14" height="14" viewBox="0 0 14 14"><path d="M3.3,7.3 L5.9,9.7 L10.6,4.6" fill="none" stroke="#c8c8c8" stroke-width="1.05" stroke-linecap="round" stroke-linejoin="round"/></svg></div>
<div class="a" style="left:447px;top:396px;width:14px;height:14px;border-radius:4px;background:#2a5a3d"><svg width="14" height="14" viewBox="0 0 14 14"><path d="M3.3,7.3 L5.9,9.7 L10.6,4.6" fill="none" stroke="#c4c8e8" stroke-width="1.05" stroke-linecap="round" stroke-linejoin="round"/></svg></div>
<div class="t" style="left:100px;top:416px;font-size:14px;color:#ececed;letter-spacing:0.15px">chain_linear_t6</div>
<div class="a" style="left:92px;top:431px;width:178px;height:1px;background:#1c1c1f"></div>
<div class="a" style="left:285px;top:416px;width:14px;height:14px;border-radius:4px;background:#1f4a17"><svg width="14" height="14" viewBox="0 0 14 14"><path d="M3.3,7.3 L5.9,9.7 L10.6,4.6" fill="none" stroke="#c8c8c8" stroke-width="1.05" stroke-linecap="round" stroke-linejoin="round"/></svg></div>
<div class="a" style="left:303px;top:416px;width:14px;height:14px;border-radius:4px;background:#1f4a17"><svg width="14" height="14" viewBox="0 0 14 14"><path d="M3.3,7.3 L5.9,9.7 L10.6,4.6" fill="none" stroke="#c8c8c8" stroke-width="1.05" stroke-linecap="round" stroke-linejoin="round"/></svg></div>
<div class="a" style="left:321px;top:416px;width:14px;height:14px;border-radius:4px;background:#1f4a17"><svg width="14" height="14" viewBox="0 0 14 14"><path d="M3.3,7.3 L5.9,9.7 L10.6,4.6" fill="none" stroke="#c8c8c8" stroke-width="1.05" stroke-linecap="round" stroke-linejoin="round"/></svg></div>
<div class="a" style="left:339px;top:416px;width:14px;height:14px;border-radius:4px;background:#1f4a17"><svg width="14" height="14" viewBox="0 0 14 14"><path d="M3.3,7.3 L5.9,9.7 L10.6,4.6" fill="none" stroke="#c8c8c8" stroke-width="1.05" stroke-linecap="round" stroke-linejoin="round"/></svg></div>
<div class="a" style="left:357px;top:416px;width:14px;height:14px;border-radius:4px;background:#1f4a17"><svg width="14" height="14" viewBox="0 0 14 14"><path d="M3.3,7.3 L5.9,9.7 L10.6,4.6" fill="none" stroke="#c8c8c8" stroke-width="1.05" stroke-linecap="round" stroke-linejoin="round"/></svg></div>
<div class="a" style="left:375px;top:416px;width:14px;height:14px;border-radius:4px;background:#1f4a17"><svg width="14" height="14" viewBox="0 0 14 14"><path d="M3.3,7.3 L5.9,9.7 L10.6,4.6" fill="none" stroke="#c8c8c8" stroke-width="1.05" stroke-linecap="round" stroke-linejoin="round"/></svg></div>
<div class="a" style="left:393px;top:416px;width:14px;height:14px;border-radius:4px;background:#1f4a17"><svg width="14" height="14" viewBox="0 0 14 14"><path d="M3.3,7.3 L5.9,9.7 L10.6,4.6" fill="none" stroke="#c8c8c8" stroke-width="1.05" stroke-linecap="round" stroke-linejoin="round"/></svg></div>
<div class="a" style="left:411px;top:416px;width:14px;height:14px;border-radius:4px;background:#1f4a17"><svg width="14" height="14" viewBox="0 0 14 14"><path d="M3.3,7.3 L5.9,9.7 L10.6,4.6" fill="none" stroke="#c8c8c8" stroke-width="1.05" stroke-linecap="round" stroke-linejoin="round"/></svg></div>
<div class="a" style="left:429px;top:416px;width:14px;height:14px;border-radius:4px;background:#1f4a17"><svg width="14" height="14" viewBox="0 0 14 14"><path d="M3.3,7.3 L5.9,9.7 L10.6,4.6" fill="none" stroke="#c8c8c8" stroke-width="1.05" stroke-linecap="round" stroke-linejoin="round"/></svg></div>
<div class="a" style="left:447px;top:416px;width:14px;height:14px;border-radius:4px;background:#2a5a3d"><svg width="14" height="14" viewBox="0 0 14 14"><path d="M3.3,7.3 L5.9,9.7 L10.6,4.6" fill="none" stroke="#c4c8e8" stroke-width="1.05" stroke-linecap="round" stroke-linejoin="round"/></svg></div>
<div class="t" style="left:100px;top:436px;font-size:14px;color:#ececed;letter-spacing:0.15px">chain_linear_t7</div>
<div class="a" style="left:92px;top:451px;width:178px;height:1px;background:#1c1c1f"></div>
<div class="a" style="left:285px;top:436px;width:14px;height:14px;border-radius:4px;background:#1f4a17"><svg width="14" height="14" viewBox="0 0 14 14"><path d="M3.3,7.3 L5.9,9.7 L10.6,4.6" fill="none" stroke="#c8c8c8" stroke-width="1.05" stroke-linecap="round" stroke-linejoin="round"/></svg></div>
<div class="a" style="left:303px;top:436px;width:14px;height:14px;border-radius:4px;background:#1f4a17"><svg width="14" height="14" viewBox="0 0 14 14"><path d="M3.3,7.3 L5.9,9.7 L10.6,4.6" fill="none" stroke="#c8c8c8" stroke-width="1.05" stroke-linecap="round" stroke-linejoin="round"/></svg></div>
<div class="a" style="left:321px;top:436px;width:14px;height:14px;border-radius:4px;background:#1f4a17"><svg width="14" height="14" viewBox="0 0 14 14"><path d="M3.3,7.3 L5.9,9.7 L10.6,4.6" fill="none" stroke="#c8c8c8" stroke-width="1.05" stroke-linecap="round" stroke-linejoin="round"/></svg></div>
<div class="a" style="left:339px;top:436px;width:14px;height:14px;border-radius:4px;background:#1f4a17"><svg width="14" height="14" viewBox="0 0 14 14"><path d="M3.3,7.3 L5.9,9.7 L10.6,4.6" fill="none" stroke="#c8c8c8" stroke-width="1.05" stroke-linecap="round" stroke-linejoin="round"/></svg></div>
<div class="a" style="left:357px;top:436px;width:14px;height:14px;border-radius:4px;background:#1f4a17"><svg width="14" height="14" viewBox="0 0 14 14"><path d="M3.3,7.3 L5.9,9.7 L10.6,4.6" fill="none" stroke="#c8c8c8" stroke-width="1.05" stroke-linecap="round" stroke-linejoin="round"/></svg></div>
<div class="a" style="left:375px;top:436px;width:14px;height:14px;border-radius:4px;background:#1f4a17"><svg width="14" height="14" viewBox="0 0 14 14"><path d="M3.3,7.3 L5.9,9.7 L10.6,4.6" fill="none" stroke="#c8c8c8" stroke-width="1.05" stroke-linecap="round" stroke-linejoin="round"/></svg></div>
<div class="a" style="left:393px;top:436px;width:14px;height:14px;border-radius:4px;background:#1f4a17"><svg width="14" height="14" viewBox="0 0 14 14"><path d="M3.3,7.3 L5.9,9.7 L10.6,4.6" fill="none" stroke="#c8c8c8" stroke-width="1.05" stroke-linecap="round" stroke-linejoin="round"/></svg></div>
<div class="a" style="left:411px;top:436px;width:14px;height:14px;border-radius:4px;background:#1f4a17"><svg width="14" height="14" viewBox="0 0 14 14"><path d="M3.3,7.3 L5.9,9.7 L10.6,4.6" fill="none" stroke="#c8c8c8" stroke-width="1.05" stroke-linecap="round" stroke-linejoin="round"/></svg></div>
<div class="a" style="left:429px;top:436px;width:14px;height:14px;border-radius:4px;background:#1f4a17"><svg width="14" height="14" viewBox="0 0 14 14"><path d="M3.3,7.3 L5.9,9.7 L10.6,4.6" fill="none" stroke="#c8c8c8" stroke-width="1.05" stroke-linecap="round" stroke-linejoin="round"/></svg></div>
<div class="a" style="left:447px;top:436px;width:14px;height:14px;border-radius:4px;background:#2a5a3d"><svg width="14" height="14" viewBox="0 0 14 14"><path d="M3.3,7.3 L5.9,9.7 L10.6,4.6" fill="none" stroke="#c4c8e8" stroke-width="1.05" stroke-linecap="round" stroke-linejoin="round"/></svg></div>
<div class="t" style="left:100px;top:456px;font-size:14px;color:#ececed;letter-spacing:0.15px">chain_linear_t8</div>
<div class="a" style="left:92px;top:471px;width:178px;height:1px;background:#1c1c1f"></div>
<div class="a" style="left:285px;top:456px;width:14px;height:14px;border-radius:4px;background:#1f4a17"><svg width="14" height="14" viewBox="0 0 14 14"><path d="M3.3,7.3 L5.9,9.7 L10.6,4.6" fill="none" stroke="#c8c8c8" stroke-width="1.05" stroke-linecap="round" stroke-linejoin="round"/></svg></div>
<div class="a" style="left:303px;top:456px;width:14px;height:14px;border-radius:4px;background:#1f4a17"><svg width="14" height="14" viewBox="0 0 14 14"><path d="M3.3,7.3 L5.9,9.7 L10.6,4.6" fill="none" stroke="#c8c8c8" stroke-width="1.05" stroke-linecap="round" stroke-linejoin="round"/></svg></div>
<div class="a" style="left:321px;top:456px;width:14px;height:14px;border-radius:4px;background:#1f4a17"><svg width="14" height="14" viewBox="0 0 14 14"><path d="M3.3,7.3 L5.9,9.7 L10.6,4.6" fill="none" stroke="#c8c8c8" stroke-width="1.05" stroke-linecap="round" stroke-linejoin="round"/></svg></div>
<div class="a" style="left:339px;top:456px;width:14px;height:14px;border-radius:4px;background:#1f4a17"><svg width="14" height="14" viewBox="0 0 14 14"><path d="M3.3,7.3 L5.9,9.7 L10.6,4.6" fill="none" stroke="#c8c8c8" stroke-width="1.05" stroke-linecap="round" stroke-linejoin="round"/></svg></div>
<div class="a" style="left:357px;top:456px;width:14px;height:14px;border-radius:4px;background:#1f4a17"><svg width="14" height="14" viewBox="0 0 14 14"><path d="M3.3,7.3 L5.9,9.7 L10.6,4.6" fill="none" stroke="#c8c8c8" stroke-width="1.05" stroke-linecap="round" stroke-linejoin="round"/></svg></div>
<div class="a" style="left:375px;top:456px;width:14px;height:14px;border-radius:4px;background:#1f4a17"><svg width="14" height="14" viewBox="0 0 14 14"><path d="M3.3,7.3 L5.9,9.7 L10.6,4.6" fill="none" stroke="#c8c8c8" stroke-width="1.05" stroke-linecap="round" stroke-linejoin="round"/></svg></div>
<div class="a" style="left:393px;top:456px;width:14px;height:14px;border-radius:4px;background:#1f4a17"><svg width="14" height="14" viewBox="0 0 14 14"><path d="M3.3,7.3 L5.9,9.7 L10.6,4.6" fill="none" stroke="#c8c8c8" stroke-width="1.05" stroke-linecap="round" stroke-linejoin="round"/></svg></div>
<div class="a" style="left:411px;top:456px;width:14px;height:14px;border-radius:4px;background:#1f4a17"><svg width="14" height="14" viewBox="0 0 14 14"><path d="M3.3,7.3 L5.9,9.7 L10.6,4.6" fill="none" stroke="#c8c8c8" stroke-width="1.05" stroke-linecap="round" stroke-linejoin="round"/></svg></div>
<div class="a" style="left:429px;top:456px;width:14px;height:14px;border-radius:4px;background:#1f4a17"><svg width="14" height="14" viewBox="0 0 14 14"><path d="M3.3,7.3 L5.9,9.7 L10.6,4.6" fill="none" stroke="#c8c8c8" stroke-width="1.05" stroke-linecap="round" stroke-linejoin="round"/></svg></div>
<div class="a" style="left:447px;top:456px;width:14px;height:14px;border-radius:4px;background:#2a5a3d"><svg width="14" height="14" viewBox="0 0 14 14"><path d="M3.3,7.3 L5.9,9.7 L10.6,4.6" fill="none" stroke="#c4c8e8" stroke-width="1.05" stroke-linecap="round" stroke-linejoin="round"/></svg></div>
<div class="t" style="left:100px;top:476px;font-size:14px;color:#ececed;letter-spacing:0.15px">chain_linear_t9</div>
<div class="a" style="left:92px;top:491px;width:178px;height:1px;background:#1c1c1f"></div>
<div class="a" style="left:285px;top:476px;width:14px;height:14px;border-radius:4px;background:#1f4a17"><svg width="14" height="14" viewBox="0 0 14 14"><path d="M3.3,7.3 L5.9,9.7 L10.6,4.6" fill="none" stroke="#c8c8c8" stroke-width="1.05" stroke-linecap="round" stroke-linejoin="round"/></svg></div>
<div class="a" style="left:303px;top:476px;width:14px;height:14px;border-radius:4px;background:#1f4a17"><svg width="14" height="14" viewBox="0 0 14 14"><path d="M3.3,7.3 L5.9,9.7 L10.6,4.6" fill="none" stroke="#c8c8c8" stroke-width="1.05" stroke-linecap="round" stroke-linejoin="round"/></svg></div>
<div class="a" style="left:321px;top:476px;width:14px;height:14px;border-radius:4px;background:#1f4a17"><svg width="14" height="14" viewBox="0 0 14 14"><path d="M3.3,7.3 L5.9,9.7 L10.6,4.6" fill="none" stroke="#c8c8c8" stroke-width="1.05" stroke-linecap="round" stroke-linejoin="round"/></svg></div>
<div class="a" style="left:339px;top:476px;width:14px;height:14px;border-radius:4px;background:#1f4a17"><svg width="14" height="14" viewBox="0 0 14 14"><path d="M3.3,7.3 L5.9,9.7 L10.6,4.6" fill="none" stroke="#c8c8c8" stroke-width="1.05" stroke-linecap="round" stroke-linejoin="round"/></svg></div>
<div class="a" style="left:357px;top:476px;width:14px;height:14px;border-radius:4px;background:#1f4a17"><svg width="14" height="14" viewBox="0 0 14 14"><path d="M3.3,7.3 L5.9,9.7 L10.6,4.6" fill="none" stroke="#c8c8c8" stroke-width="1.05" stroke-linecap="round" stroke-linejoin="round"/></svg></div>
<div class="a" style="left:375px;top:476px;width:14px;height:14px;border-radius:4px;background:#1f4a17"><svg width="14" height="14" viewBox="0 0 14 14"><path d="M3.3,7.3 L5.9,9.7 L10.6,4.6" fill="none" stroke="#c8c8c8" stroke-width="1.05" stroke-linecap="round" stroke-linejoin="round"/></svg></div>
<div class="a" style="left:393px;top:476px;width:14px;height:14px;border-radius:4px;background:#1f4a17"><svg width="14" height="14" viewBox="0 0 14 14"><path d="M3.3,7.3 L5.9,9.7 L10.6,4.6" fill="none" stroke="#c8c8c8" stroke-width="1.05" stroke-linecap="round" stroke-linejoin="round"/></svg></div>
<div class="a" style="left:411px;top:476px;width:14px;height:14px;border-radius:4px;background:#1f4a17"><svg width="14" height="14" viewBox="0 0 14 14"><path d="M3.3,7.3 L5.9,9.7 L10.6,4.6" fill="none" stroke="#c8c8c8" stroke-width="1.05" stroke-linecap="round" stroke-linejoin="round"/></svg></div>
<div class="a" style="left:429px;top:476px;width:14px;height:14px;border-radius:4px;background:#1f4a17"><svg width="14" height="14" viewBox="0 0 14 14"><path d="M3.3,7.3 L5.9,9.7 L10.6,4.6" fill="none" stroke="#c8c8c8" stroke-width="1.05" stroke-linecap="round" stroke-linejoin="round"/></svg></div>
<div class="a" style="left:447px;top:476px;width:14px;height:14px;border-radius:4px;background:#2a5a3d"><svg width="14" height="14" viewBox="0 0 14 14"><path d="M3.3,7.3 L5.9,9.7 L10.6,4.6" fill="none" stroke="#c4c8e8" stroke-width="1.05" stroke-linecap="round" stroke-linejoin="round"/></svg></div>
<div class="t" style="left:100px;top:496px;font-size:14px;color:#ececed;letter-spacing:0.15px">chain_t10</div>
<div class="a" style="left:92px;top:511px;width:178px;height:1px;background:#1c1c1f"></div>
<div class="a" style="left:285px;top:496px;width:14px;height:14px;border-radius:4px;background:#1f4a17"><svg width="14" height="14" viewBox="0 0 14 14"><path d="M3.3,7.3 L5.9,9.7 L10.6,4.6" fill="none" stroke="#c8c8c8" stroke-width="1.05" stroke-linecap="round" stroke-linejoin="round"/></svg></div>
<div class="a" style="left:303px;top:496px;width:14px;height:14px;border-radius:4px;background:#1f4a17"><svg width="14" height="14" viewBox="0 0 14 14"><path d="M3.3,7.3 L5.9,9.7 L10.6,4.6" fill="none" stroke="#c8c8c8" stroke-width="1.05" stroke-linecap="round" stroke-linejoin="round"/></svg></div>
<div class="a" style="left:321px;top:496px;width:14px;height:14px;border-radius:4px;background:#1f4a17"><svg width="14" height="14" viewBox="0 0 14 14"><path d="M3.3,7.3 L5.9,9.7 L10.6,4.6" fill="none" stroke="#c8c8c8" stroke-width="1.05" stroke-linecap="round" stroke-linejoin="round"/></svg></div>
<div class="a" style="left:339px;top:496px;width:14px;height:14px;border-radius:4px;background:#1f4a17"><svg width="14" height="14" viewBox="0 0 14 14"><path d="M3.3,7.3 L5.9,9.7 L10.6,4.6" fill="none" stroke="#c8c8c8" stroke-width="1.05" stroke-linecap="round" stroke-linejoin="round"/></svg></div>
<div class="a" style="left:357px;top:496px;width:14px;height:14px;border-radius:4px;background:#1f4a17"><svg width="14" height="14" viewBox="0 0 14 14"><path d="M3.3,7.3 L5.9,9.7 L10.6,4.6" fill="none" stroke="#c8c8c8" stroke-width="1.05" stroke-linecap="round" stroke-linejoin="round"/></svg></div>
<div class="a" style="left:375px;top:496px;width:14px;height:14px;border-radius:4px;background:#1f4a17"><svg width="14" height="14" viewBox="0 0 14 14"><path d="M3.3,7.3 L5.9,9.7 L10.6,4.6" fill="none" stroke="#c8c8c8" stroke-width="1.05" stroke-linecap="round" stroke-linejoin="round"/></svg></div>
<div class="a" style="left:393px;top:496px;width:14px;height:14px;border-radius:4px;background:#1f4a17"><svg width="14" height="14" viewBox="0 0 14 14"><path d="M3.3,7.3 L5.9,9.7 L10.6,4.6" fill="none" stroke="#c8c8c8" stroke-width="1.05" stroke-linecap="round" stroke-linejoin="round"/></svg></div>
<div class="a" style="left:411px;top:496px;width:14px;height:14px;border-radius:4px;background:#1f4a17"><svg width="14" height="14" viewBox="0 0 14 14"><path d="M3.3,7.3 L5.9,9.7 L10.6,4.6" fill="none" stroke="#c8c8c8" stroke-width="1.05" stroke-linecap="round" stroke-linejoin="round"/></svg></div>
<div class="a" style="left:429px;top:496px;width:14px;height:14px;border-radius:4px;background:#1f4a17"><svg width="14" height="14" viewBox="0 0 14 14"><path d="M3.3,7.3 L5.9,9.7 L10.6,4.6" fill="none" stroke="#c8c8c8" stroke-width="1.05" stroke-linecap="round" stroke-linejoin="round"/></svg></div>
<div class="a" style="left:447px;top:496px;width:14px;height:14px;border-radius:4px;background:#2a5a3d"><svg width="14" height="14" viewBox="0 0 14 14"><path d="M3.3,7.3 L5.9,9.7 L10.6,4.6" fill="none" stroke="#c4c8e8" stroke-width="1.05" stroke-linecap="round" stroke-linejoin="round"/></svg></div>
<div class="t" style="left:100px;top:516px;font-size:14px;color:#ececed;letter-spacing:0.15px">chain_t11</div>
<div class="a" style="left:92px;top:531px;width:178px;height:1px;background:#1c1c1f"></div>
<div class="a" style="left:285px;top:516px;width:14px;height:14px;border-radius:4px;background:#1f4a17"><svg width="14" height="14" viewBox="0 0 14 14"><path d="M3.3,7.3 L5.9,9.7 L10.6,4.6" fill="none" stroke="#c8c8c8" stroke-width="1.05" stroke-linecap="round" stroke-linejoin="round"/></svg></div>
<div class="a" style="left:303px;top:516px;width:14px;height:14px;border-radius:4px;background:#1f4a17"><svg width="14" height="14" viewBox="0 0 14 14"><path d="M3.3,7.3 L5.9,9.7 L10.6,4.6" fill="none" stroke="#c8c8c8" stroke-width="1.05" stroke-linecap="round" stroke-linejoin="round"/></svg></div>
<div class="a" style="left:321px;top:516px;width:14px;height:14px;border-radius:4px;background:#1f4a17"><svg width="14" height="14" viewBox="0 0 14 14"><path d="M3.3,7.3 L5.9,9.7 L10.6,4.6" fill="none" stroke="#c8c8c8" stroke-width="1.05" stroke-linecap="round" stroke-linejoin="round"/></svg></div>
<div class="a" style="left:339px;top:516px;width:14px;height:14px;border-radius:4px;background:#1f4a17"><svg width="14" height="14" viewBox="0 0 14 14"><path d="M3.3,7.3 L5.9,9.7 L10.6,4.6" fill="none" stroke="#c8c8c8" stroke-width="1.05" stroke-linecap="round" stroke-linejoin="round"/></svg></div>
<div class="a" style="left:357px;top:516px;width:14px;height:14px;border-radius:4px;background:#1f4a17"><svg width="14" height="14" viewBox="0 0 14 14"><path d="M3.3,7.3 L5.9,9.7 L10.6,4.6" fill="none" stroke="#c8c8c8" stroke-width="1.05" stroke-linecap="round" stroke-linejoin="round"/></svg></div>
<div class="a" style="left:375px;top:516px;width:14px;height:14px;border-radius:4px;background:#1f4a17"><svg width="14" height="14" viewBox="0 0 14 14"><path d="M3.3,7.3 L5.9,9.7 L10.6,4.6" fill="none" stroke="#c8c8c8" stroke-width="1.05" stroke-linecap="round" stroke-linejoin="round"/></svg></div>
<div class="a" style="left:393px;top:516px;width:14px;height:14px;border-radius:4px;background:#1f4a17"><svg width="14" height="14" viewBox="0 0 14 14"><path d="M3.3,7.3 L5.9,9.7 L10.6,4.6" fill="none" stroke="#c8c8c8" stroke-width="1.05" stroke-linecap="round" stroke-linejoin="round"/></svg></div>
<div class="a" style="left:411px;top:516px;width:14px;height:14px;border-radius:4px;background:#1f4a17"><svg width="14" height="14" viewBox="0 0 14 14"><path d="M3.3,7.3 L5.9,9.7 L10.6,4.6" fill="none" stroke="#c8c8c8" stroke-width="1.05" stroke-linecap="round" stroke-linejoin="round"/></svg></div>
<div class="a" style="left:429px;top:516px;width:14px;height:14px;border-radius:4px;background:#1f4a17"><svg width="14" height="14" viewBox="0 0 14 14"><path d="M3.3,7.3 L5.9,9.7 L10.6,4.6" fill="none" stroke="#c8c8c8" stroke-width="1.05" stroke-linecap="round" stroke-linejoin="round"/></svg></div>
<div class="a" style="left:447px;top:516px;width:14px;height:14px;border-radius:4px;background:#2a5a3d"><svg width="14" height="14" viewBox="0 0 14 14"><path d="M3.3,7.3 L5.9,9.7 L10.6,4.6" fill="none" stroke="#c4c8e8" stroke-width="1.05" stroke-linecap="round" stroke-linejoin="round"/></svg></div>
<div class="t" style="left:100px;top:536px;font-size:14px;color:#ececed;letter-spacing:0.15px">empty_1</div>
<div class="a" style="left:92px;top:551px;width:178px;height:1px;background:#1c1c1f"></div>
<div class="a" style="left:285px;top:536px;width:14px;height:14px;border-radius:4px;background:#c9372c"><svg width="14" height="14" viewBox="0 0 14 14"><path d="M4.2,4.2 L9.8,9.8 M9.8,4.2 L4.2,9.8" fill="none" stroke="#fff" stroke-width="1.2"/></svg></div>
<div class="a" style="left:303px;top:536px;width:14px;height:14px;border-radius:4px;background:#1f4a17"><svg width="14" height="14" viewBox="0 0 14 14"><path d="M3.3,7.3 L5.9,9.7 L10.6,4.6" fill="none" stroke="#c8c8c8" stroke-width="1.05" stroke-linecap="round" stroke-linejoin="round"/></svg></div>
<div class="a" style="left:321px;top:536px;width:14px;height:14px;border-radius:4px;background:#c9372c"><svg width="14" height="14" viewBox="0 0 14 14"><path d="M4.2,4.2 L9.8,9.8 M9.8,4.2 L4.2,9.8" fill="none" stroke="#fff" stroke-width="1.2"/></svg></div>
<div class="a" style="left:339px;top:536px;width:14px;height:14px;border-radius:4px;background:#c9372c"><svg width="14" height="14" viewBox="0 0 14 14"><path d="M4.2,4.2 L9.8,9.8 M9.8,4.2 L4.2,9.8" fill="none" stroke="#fff" stroke-width="1.2"/></svg></div>
<div class="a" style="left:357px;top:536px;width:14px;height:14px;border-radius:4px;background:#c9372c"><svg width="14" height="14" viewBox="0 0 14 14"><path d="M4.2,4.2 L9.8,9.8 M9.8,4.2 L4.2,9.8" fill="none" stroke="#fff" stroke-width="1.2"/></svg></div>
<div class="a" style="left:375px;top:536px;width:14px;height:14px;border-radius:4px;background:#1f4a17"><svg width="14" height="14" viewBox="0 0 14 14"><path d="M3.3,7.3 L5.9,9.7 L10.6,4.6" fill="none" stroke="#c8c8c8" stroke-width="1.05" stroke-linecap="round" stroke-linejoin="round"/></svg></div>
<div class="a" style="left:393px;top:536px;width:14px;height:14px;border-radius:4px;background:#c9372c"><svg width="14" height="14" viewBox="0 0 14 14"><path d="M4.2,4.2 L9.8,9.8 M9.8,4.2 L4.2,9.8" fill="none" stroke="#fff" stroke-width="1.2"/></svg></div>
<div class="a" style="left:411px;top:536px;width:14px;height:14px;border-radius:4px;background:#1f4a17"><svg width="14" height="14" viewBox="0 0 14 14"><path d="M3.3,7.3 L5.9,9.7 L10.6,4.6" fill="none" stroke="#c8c8c8" stroke-width="1.05" stroke-linecap="round" stroke-linejoin="round"/></svg></div>
<div class="a" style="left:429px;top:536px;width:14px;height:14px;border-radius:4px;background:#1f4a17"><svg width="14" height="14" viewBox="0 0 14 14"><path d="M3.3,7.3 L5.9,9.7 L10.6,4.6" fill="none" stroke="#c8c8c8" stroke-width="1.05" stroke-linecap="round" stroke-linejoin="round"/></svg></div>
<div class="a" style="left:447px;top:536px;width:14px;height:14px;border-radius:4px;background:#2a5a3d"><svg width="14" height="14" viewBox="0 0 14 14"><path d="M3.3,7.3 L5.9,9.7 L10.6,4.6" fill="none" stroke="#c4c8e8" stroke-width="1.05" stroke-linecap="round" stroke-linejoin="round"/></svg></div>
<div class="t" style="left:100px;top:556px;font-size:14px;color:#ececed;letter-spacing:0.15px">end_chain_linear</div>
<div class="a" style="left:92px;top:571px;width:178px;height:1px;background:#1c1c1f"></div>
<div class="a" style="left:285px;top:556px;width:14px;height:14px;border-radius:4px;background:#1f4a17"><svg width="14" height="14" viewBox="0 0 14 14"><path d="M3.3,7.3 L5.9,9.7 L10.6,4.6" fill="none" stroke="#c8c8c8" stroke-width="1.05" stroke-linecap="round" stroke-linejoin="round"/></svg></div>
<div class="a" style="left:303px;top:556px;width:14px;height:14px;border-radius:4px;background:#1f4a17"><svg width="14" height="14" viewBox="0 0 14 14"><path d="M3.3,7.3 L5.9,9.7 L10.6,4.6" fill="none" stroke="#c8c8c8" stroke-width="1.05" stroke-linecap="round" stroke-linejoin="round"/></svg></div>
<div class="a" style="left:321px;top:556px;width:14px;height:14px;border-radius:4px;background:#1f4a17"><svg width="14" height="14" viewBox="0 0 14 14"><path d="M3.3,7.3 L5.9,9.7 L10.6,4.6" fill="none" stroke="#c8c8c8" stroke-width="1.05" stroke-linecap="round" stroke-linejoin="round"/></svg></div>
<div class="a" style="left:339px;top:556px;width:14px;height:14px;border-radius:4px;background:#1f4a17"><svg width="14" height="14" viewBox="0 0 14 14"><path d="M3.3,7.3 L5.9,9.7 L10.6,4.6" fill="none" stroke="#c8c8c8" stroke-width="1.05" stroke-linecap="round" stroke-linejoin="round"/></svg></div>
<div class="a" style="left:357px;top:556px;width:14px;height:14px;border-radius:4px;background:#1f4a17"><svg width="14" height="14" viewBox="0 0 14 14"><path d="M3.3,7.3 L5.9,9.7 L10.6,4.6" fill="none" stroke="#c8c8c8" stroke-width="1.05" stroke-linecap="round" stroke-linejoin="round"/></svg></div>
<div class="a" style="left:375px;top:556px;width:14px;height:14px;border-radius:4px;background:#1f4a17"><svg width="14" height="14" viewBox="0 0 14 14"><path d="M3.3,7.3 L5.9,9.7 L10.6,4.6" fill="none" stroke="#c8c8c8" stroke-width="1.05" stroke-linecap="round" stroke-linejoin="round"/></svg></div>
<div class="a" style="left:393px;top:556px;width:14px;height:14px;border-radius:4px;background:#1f4a17"><svg width="14" height="14" viewBox="0 0 14 14"><path d="M3.3,7.3 L5.9,9.7 L10.6,4.6" fill="none" stroke="#c8c8c8" stroke-width="1.05" stroke-linecap="round" stroke-linejoin="round"/></svg></div>
<div class="a" style="left:411px;top:556px;width:14px;height:14px;border-radius:4px;background:#1f4a17"><svg width="14" height="14" viewBox="0 0 14 14"><path d="M3.3,7.3 L5.9,9.7 L10.6,4.6" fill="none" stroke="#c8c8c8" stroke-width="1.05" stroke-linecap="round" stroke-linejoin="round"/></svg></div>
<div class="a" style="left:429px;top:556px;width:14px;height:14px;border-radius:4px;background:#1f4a17"><svg width="14" height="14" viewBox="0 0 14 14"><path d="M3.3,7.3 L5.9,9.7 L10.6,4.6" fill="none" stroke="#c8c8c8" stroke-width="1.05" stroke-linecap="round" stroke-linejoin="round"/></svg></div>
<div class="a" style="left:447px;top:556px;width:14px;height:14px;border-radius:4px;background:#2a5a3d"><svg width="14" height="14" viewBox="0 0 14 14"><path d="M3.3,7.3 L5.9,9.7 L10.6,4.6" fill="none" stroke="#c4c8e8" stroke-width="1.05" stroke-linecap="round" stroke-linejoin="round"/></svg></div>
<div class="t" style="left:100px;top:576px;font-size:14px;color:#ececed;letter-spacing:0.15px">chain_t12</div>
<div class="a" style="left:92px;top:591px;width:178px;height:1px;background:#1c1c1f"></div>
<div class="a" style="left:285px;top:576px;width:14px;height:14px;border-radius:4px;background:#e9792d"><svg width="14" height="14" viewBox="0 0 14 14"><g fill="none" stroke="#3a1a05" stroke-width="1.05"><circle cx="7" cy="7" r="4.3" stroke-dasharray="6.5 2.5" transform="rotate(-75 7 7)"/></g><circle cx="7" cy="7.2" r="1.7" fill="#8a4514" stroke="#3a1a05" stroke-width="0.9"/></svg></div>
<div class="a" style="left:303px;top:576px;width:14px;height:14px;border-radius:4px;background:#1f4a17"><svg width="14" height="14" viewBox="0 0 14 14"><path d="M3.3,7.3 L5.9,9.7 L10.6,4.6" fill="none" stroke="#c8c8c8" stroke-width="1.05" stroke-linecap="round" stroke-linejoin="round"/></svg></div>
<div class="a" style="left:321px;top:576px;width:14px;height:14px;border-radius:4px;background:#e9792d"><svg width="14" height="14" viewBox="0 0 14 14"><g fill="none" stroke="#3a1a05" stroke-width="1.05"><circle cx="7" cy="7" r="4.3" stroke-dasharray="6.5 2.5" transform="rotate(-75 7 7)"/></g><circle cx="7" cy="7.2" r="1.7" fill="#8a4514" stroke="#3a1a05" stroke-width="0.9"/></svg></div>
<div class="a" style="left:339px;top:576px;width:14px;height:14px;border-radius:4px;background:#e9792d"><svg width="14" height="14" viewBox="0 0 14 14"><g fill="none" stroke="#3a1a05" stroke-width="1.05"><circle cx="7" cy="7" r="4.3" stroke-dasharray="6.5 2.5" transform="rotate(-75 7 7)"/></g><circle cx="7" cy="7.2" r="1.7" fill="#8a4514" stroke="#3a1a05" stroke-width="0.9"/></svg></div>
<div class="a" style="left:357px;top:576px;width:14px;height:14px;border-radius:4px;background:#e9792d"><svg width="14" height="14" viewBox="0 0 14 14"><g fill="none" stroke="#3a1a05" stroke-width="1.05"><circle cx="7" cy="7" r="4.3" stroke-dasharray="6.5 2.5" transform="rotate(-75 7 7)"/></g><circle cx="7" cy="7.2" r="1.7" fill="#8a4514" stroke="#3a1a05" stroke-width="0.9"/></svg></div>
<div class="a" style="left:375px;top:576px;width:14px;height:14px;border-radius:4px;background:#1f4a17"><svg width="14" height="14" viewBox="0 0 14 14"><path d="M3.3,7.3 L5.9,9.7 L10.6,4.6" fill="none" stroke="#c8c8c8" stroke-width="1.05" stroke-linecap="round" stroke-linejoin="round"/></svg></div>
<div class="a" style="left:393px;top:576px;width:14px;height:14px;border-radius:4px;background:#e9792d"><svg width="14" height="14" viewBox="0 0 14 14"><g fill="none" stroke="#3a1a05" stroke-width="1.05"><circle cx="7" cy="7" r="4.3" stroke-dasharray="6.5 2.5" transform="rotate(-75 7 7)"/></g><circle cx="7" cy="7.2" r="1.7" fill="#8a4514" stroke="#3a1a05" stroke-width="0.9"/></svg></div>
<div class="a" style="left:411px;top:576px;width:14px;height:14px;border-radius:4px;background:#1f4a17"><svg width="14" height="14" viewBox="0 0 14 14"><path d="M3.3,7.3 L5.9,9.7 L10.6,4.6" fill="none" stroke="#c8c8c8" stroke-width="1.05" stroke-linecap="round" stroke-linejoin="round"/></svg></div>
<div class="a" style="left:429px;top:576px;width:14px;height:14px;border-radius:4px;background:#1f4a17"><svg width="14" height="14" viewBox="0 0 14 14"><path d="M3.3,7.3 L5.9,9.7 L10.6,4.6" fill="none" stroke="#c8c8c8" stroke-width="1.05" stroke-linecap="round" stroke-linejoin="round"/></svg></div>
<div class="a" style="left:447px;top:576px;width:14px;height:14px;border-radius:4px;background:#2a5a3d"><svg width="14" height="14" viewBox="0 0 14 14"><path d="M3.3,7.3 L5.9,9.7 L10.6,4.6" fill="none" stroke="#c4c8e8" stroke-width="1.05" stroke-linecap="round" stroke-linejoin="round"/></svg></div>
<div class="t" style="left:100px;top:596px;font-size:14px;color:#ececed;letter-spacing:0.15px">chain_t13</div>
<div class="a" style="left:92px;top:611px;width:178px;height:1px;background:#1c1c1f"></div>
<div class="a" style="left:285px;top:596px;width:14px;height:14px;border-radius:4px;background:#e9792d"><svg width="14" height="14" viewBox="0 0 14 14"><g fill="none" stroke="#3a1a05" stroke-width="1.05"><circle cx="7" cy="7" r="4.3" stroke-dasharray="6.5 2.5" transform="rotate(-75 7 7)"/></g><circle cx="7" cy="7.2" r="1.7" fill="#8a4514" stroke="#3a1a05" stroke-width="0.9"/></svg></div>
<div class="a" style="left:303px;top:596px;width:14px;height:14px;border-radius:4px;background:#1f4a17"><svg width="14" height="14" viewBox="0 0 14 14"><path d="M3.3,7.3 L5.9,9.7 L10.6,4.6" fill="none" stroke="#c8c8c8" stroke-width="1.05" stroke-linecap="round" stroke-linejoin="round"/></svg></div>
<div class="a" style="left:321px;top:596px;width:14px;height:14px;border-radius:4px;background:#e9792d"><svg width="14" height="14" viewBox="0 0 14 14"><g fill="none" stroke="#3a1a05" stroke-width="1.05"><circle cx="7" cy="7" r="4.3" stroke-dasharray="6.5 2.5" transform="rotate(-75 7 7)"/></g><circle cx="7" cy="7.2" r="1.7" fill="#8a4514" stroke="#3a1a05" stroke-width="0.9"/></svg></div>
<div class="a" style="left:339px;top:596px;width:14px;height:14px;border-radius:4px;background:#e9792d"><svg width="14" height="14" viewBox="0 0 14 14"><g fill="none" stroke="#3a1a05" stroke-width="1.05"><circle cx="7" cy="7" r="4.3" stroke-dasharray="6.5 2.5" transform="rotate(-75 7 7)"/></g><circle cx="7" cy="7.2" r="1.7" fill="#8a4514" stroke="#3a1a05" stroke-width="0.9"/></svg></div>
<div class="a" style="left:357px;top:596px;width:14px;height:14px;border-radius:4px;background:#e9792d"><svg width="14" height="14" viewBox="0 0 14 14"><g fill="none" stroke="#3a1a05" stroke-width="1.05"><circle cx="7" cy="7" r="4.3" stroke-dasharray="6.5 2.5" transform="rotate(-75 7 7)"/></g><circle cx="7" cy="7.2" r="1.7" fill="#8a4514" stroke="#3a1a05" stroke-width="0.9"/></svg></div>
<div class="a" style="left:375px;top:596px;width:14px;height:14px;border-radius:4px;background:#1f4a17"><svg width="14" height="14" viewBox="0 0 14 14"><path d="M3.3,7.3 L5.9,9.7 L10.6,4.6" fill="none" stroke="#c8c8c8" stroke-width="1.05" stroke-linecap="round" stroke-linejoin="round"/></svg></div>
<div class="a" style="left:393px;top:596px;width:14px;height:14px;border-radius:4px;background:#e9792d"><svg width="14" height="14" viewBox="0 0 14 14"><g fill="none" stroke="#3a1a05" stroke-width="1.05"><circle cx="7" cy="7" r="4.3" stroke-dasharray="6.5 2.5" transform="rotate(-75 7 7)"/></g><circle cx="7" cy="7.2" r="1.7" fill="#8a4514" stroke="#3a1a05" stroke-width="0.9"/></svg></div>
<div class="a" style="left:411px;top:596px;width:14px;height:14px;border-radius:4px;background:#1f4a17"><svg width="14" height="14" viewBox="0 0 14 14"><path d="M3.3,7.3 L5.9,9.7 L10.6,4.6" fill="none" stroke="#c8c8c8" stroke-width="1.05" stroke-linecap="round" stroke-linejoin="round"/></svg></div>
<div class="a" style="left:429px;top:596px;width:14px;height:14px;border-radius:4px;background:#1f4a17"><svg width="14" height="14" viewBox="0 0 14 14"><path d="M3.3,7.3 L5.9,9.7 L10.6,4.6" fill="none" stroke="#c8c8c8" stroke-width="1.05" stroke-linecap="round" stroke-linejoin="round"/></svg></div>
<div class="a" style="left:447px;top:596px;width:14px;height:14px;border-radius:4px;background:#2a5a3d"><svg width="14" height="14" viewBox="0 0 14 14"><path d="M3.3,7.3 L5.9,9.7 L10.6,4.6" fill="none" stroke="#c4c8e8" stroke-width="1.05" stroke-linecap="round" stroke-linejoin="round"/></svg></div>
<div class="t" style="left:100px;top:616px;font-size:14px;color:#ececed;letter-spacing:0.15px">chain_t14</div>
<div class="a" style="left:92px;top:631px;width:178px;height:1px;background:#1c1c1f"></div>
<div class="a" style="left:285px;top:616px;width:14px;height:14px;border-radius:4px;background:#e9792d"><svg width="14" height="14" viewBox="0 0 14 14"><g fill="none" stroke="#3a1a05" stroke-width="1.05"><circle cx="7" cy="7" r="4.3" stroke-dasharray="6.5 2.5" transform="rotate(-75 7 7)"/></g><circle cx="7" cy="7.2" r="1.7" fill="#8a4514" stroke="#3a1a05" stroke-width="0.9"/></svg></div>
<div class="a" style="left:303px;top:616px;width:14px;height:14px;border-radius:4px;background:#1f4a17"><svg width="14" height="14" viewBox="0 0 14 14"><path d="M3.3,7.3 L5.9,9.7 L10.6,4.6" fill="none" stroke="#c8c8c8" stroke-width="1.05" stroke-linecap="round" stroke-linejoin="round"/></svg></div>
<div class="a" style="left:321px;top:616px;width:14px;height:14px;border-radius:4px;background:#e9792d"><svg width="14" height="14" viewBox="0 0 14 14"><g fill="none" stroke="#3a1a05" stroke-width="1.05"><circle cx="7" cy="7" r="4.3" stroke-dasharray="6.5 2.5" transform="rotate(-75 7 7)"/></g><circle cx="7" cy="7.2" r="1.7" fill="#8a4514" stroke="#3a1a05" stroke-width="0.9"/></svg></div>
<div class="a" style="left:339px;top:616px;width:14px;height:14px;border-radius:4px;background:#e9792d"><svg width="14" height="14" viewBox="0 0 14 14"><g fill="none" stroke="#3a1a05" stroke-width="1.05"><circle cx="7" cy="7" r="4.3" stroke-dasharray="6.5 2.5" transform="rotate(-75 7 7)"/></g><circle cx="7" cy="7.2" r="1.7" fill="#8a4514" stroke="#3a1a05" stroke-width="0.9"/></svg></div>
<div class="a" style="left:357px;top:616px;width:14px;height:14px;border-radius:4px;background:#e9792d"><svg width="14" height="14" viewBox="0 0 14 14"><g fill="none" stroke="#3a1a05" stroke-width="1.05"><circle cx="7" cy="7" r="4.3" stroke-dasharray="6.5 2.5" transform="rotate(-75 7 7)"/></g><circle cx="7" cy="7.2" r="1.7" fill="#8a4514" stroke="#3a1a05" stroke-width="0.9"/></svg></div>
<div class="a" style="left:375px;top:616px;width:14px;height:14px;border-radius:4px;background:#1f4a17"><svg width="14" height="14" viewBox="0 0 14 14"><path d="M3.3,7.3 L5.9,9.7 L10.6,4.6" fill="none" stroke="#c8c8c8" stroke-width="1.05" stroke-linecap="round" stroke-linejoin="round"/></svg></div>
<div class="a" style="left:393px;top:616px;width:14px;height:14px;border-radius:4px;background:#e9792d"><svg width="14" height="14" viewBox="0 0 14 14"><g fill="none" stroke="#3a1a05" stroke-width="1.05"><circle cx="7" cy="7" r="4.3" stroke-dasharray="6.5 2.5" transform="rotate(-75 7 7)"/></g><circle cx="7" cy="7.2" r="1.7" fill="#8a4514" stroke="#3a1a05" stroke-width="0.9"/></svg></div>
<div class="a" style="left:411px;top:616px;width:14px;height:14px;border-radius:4px;background:#1f4a17"><svg width="14" height="14" viewBox="0 0 14 14"><path d="M3.3,7.3 L5.9,9.7 L10.6,4.6" fill="none" stroke="#c8c8c8" stroke-width="1.05" stroke-linecap="round" stroke-linejoin="round"/></svg></div>
<div class="a" style="left:429px;top:616px;width:14px;height:14px;border-radius:4px;background:#1f4a17"><svg width="14" height="14" viewBox="0 0 14 14"><path d="M3.3,7.3 L5.9,9.7 L10.6,4.6" fill="none" stroke="#c8c8c8" stroke-width="1.05" stroke-linecap="round" stroke-linejoin="round"/></svg></div>
<div class="a" style="left:447px;top:616px;width:14px;height:14px;border-radius:4px;background:#2a5a3d"><svg width="14" height="14" viewBox="0 0 14 14"><path d="M3.3,7.3 L5.9,9.7 L10.6,4.6" fill="none" stroke="#c4c8e8" stroke-width="1.05" stroke-linecap="round" stroke-linejoin="round"/></svg></div>
<div class="t" style="left:100px;top:636px;font-size:14px;color:#ececed;letter-spacing:0.15px">chain_t15</div>
<div class="a" style="left:92px;top:651px;width:178px;height:1px;background:#1c1c1f"></div>
<div class="a" style="left:285px;top:636px;width:14px;height:14px;border-radius:4px;background:#e9792d"><svg width="14" height="14" viewBox="0 0 14 14"><g fill="none" stroke="#3a1a05" stroke-width="1.05"><circle cx="7" cy="7" r="4.3" stroke-dasharray="6.5 2.5" transform="rotate(-75 7 7)"/></g><circle cx="7" cy="7.2" r="1.7" fill="#8a4514" stroke="#3a1a05" stroke-width="0.9"/></svg></div>
<div class="a" style="left:303px;top:636px;width:14px;height:14px;border-radius:4px;background:#1f4a17"><svg width="14" height="14" viewBox="0 0 14 14"><path d="M3.3,7.3 L5.9,9.7 L10.6,4.6" fill="none" stroke="#c8c8c8" stroke-width="1.05" stroke-linecap="round" stroke-linejoin="round"/></svg></div>
<div class="a" style="left:321px;top:636px;width:14px;height:14px;border-radius:4px;background:#e9792d"><svg width="14" height="14" viewBox="0 0 14 14"><g fill="none" stroke="#3a1a05" stroke-width="1.05"><circle cx="7" cy="7" r="4.3" stroke-dasharray="6.5 2.5" transform="rotate(-75 7 7)"/></g><circle cx="7" cy="7.2" r="1.7" fill="#8a4514" stroke="#3a1a05" stroke-width="0.9"/></svg></div>
<div class="a" style="left:339px;top:636px;width:14px;height:14px;border-radius:4px;background:#e9792d"><svg width="14" height="14" viewBox="0 0 14 14"><g fill="none" stroke="#3a1a05" stroke-width="1.05"><circle cx="7" cy="7" r="4.3" stroke-dasharray="6.5 2.5" transform="rotate(-75 7 7)"/></g><circle cx="7" cy="7.2" r="1.7" fill="#8a4514" stroke="#3a1a05" stroke-width="0.9"/></svg></div>
<div class="a" style="left:357px;top:636px;width:14px;height:14px;border-radius:4px;background:#e9792d"><svg width="14" height="14" viewBox="0 0 14 14"><g fill="none" stroke="#3a1a05" stroke-width="1.05"><circle cx="7" cy="7" r="4.3" stroke-dasharray="6.5 2.5" transform="rotate(-75 7 7)"/></g><circle cx="7" cy="7.2" r="1.7" fill="#8a4514" stroke="#3a1a05" stroke-width="0.9"/></svg></div>
<div class="a" style="left:375px;top:636px;width:14px;height:14px;border-radius:4px;background:#1f4a17"><svg width="14" height="14" viewBox="0 0 14 14"><path d="M3.3,7.3 L5.9,9.7 L10.6,4.6" fill="none" stroke="#c8c8c8" stroke-width="1.05" stroke-linecap="round" stroke-linejoin="round"/></svg></div>
<div class="a" style="left:393px;top:636px;width:14px;height:14px;border-radius:4px;background:#e9792d"><svg width="14" height="14" viewBox="0 0 14 14"><g fill="none" stroke="#3a1a05" stroke-width="1.05"><circle cx="7" cy="7" r="4.3" stroke-dasharray="6.5 2.5" transform="rotate(-75 7 7)"/></g><circle cx="7" cy="7.2" r="1.7" fill="#8a4514" stroke="#3a1a05" stroke-width="0.9"/></svg></div>
<div class="a" style="left:411px;top:636px;width:14px;height:14px;border-radius:4px;background:#1f4a17"><svg width="14" height="14" viewBox="0 0 14 14"><path d="M3.3,7.3 L5.9,9.7 L10.6,4.6" fill="none" stroke="#c8c8c8" stroke-width="1.05" stroke-linecap="round" stroke-linejoin="round"/></svg></div>
<div class="a" style="left:429px;top:636px;width:14px;height:14px;border-radius:4px;background:#1f4a17"><svg width="14" height="14" viewBox="0 0 14 14"><path d="M3.3,7.3 L5.9,9.7 L10.6,4.6" fill="none" stroke="#c8c8c8" stroke-width="1.05" stroke-linecap="round" stroke-linejoin="round"/></svg></div>
<div class="a" style="left:447px;top:636px;width:14px;height:14px;border-radius:4px;background:#2a5a3d"><svg width="14" height="14" viewBox="0 0 14 14"><path d="M3.3,7.3 L5.9,9.7 L10.6,4.6" fill="none" stroke="#c4c8e8" stroke-width="1.05" stroke-linecap="round" stroke-linejoin="round"/></svg></div>
<div class="t" style="left:100px;top:656px;font-size:14px;color:#ececed;letter-spacing:0.15px">chain_t16</div>
<div class="a" style="left:92px;top:671px;width:178px;height:1px;background:#1c1c1f"></div>
<div class="a" style="left:285px;top:656px;width:14px;height:14px;border-radius:4px;background:#e9792d"><svg width="14" height="14" viewBox="0 0 14 14"><g fill="none" stroke="#3a1a05" stroke-width="1.05"><circle cx="7" cy="7" r="4.3" stroke-dasharray="6.5 2.5" transform="rotate(-75 7 7)"/></g><circle cx="7" cy="7.2" r="1.7" fill="#8a4514" stroke="#3a1a05" stroke-width="0.9"/></svg></div>
<div class="a" style="left:303px;top:656px;width:14px;height:14px;border-radius:4px;background:#1f4a17"><svg width="14" height="14" viewBox="0 0 14 14"><path d="M3.3,7.3 L5.9,9.7 L10.6,4.6" fill="none" stroke="#c8c8c8" stroke-width="1.05" stroke-linecap="round" stroke-linejoin="round"/></svg></div>
<div class="a" style="left:321px;top:656px;width:14px;height:14px;border-radius:4px;background:#e9792d"><svg width="14" height="14" viewBox="0 0 14 14"><g fill="none" stroke="#3a1a05" stroke-width="1.05"><circle cx="7" cy="7" r="4.3" stroke-dasharray="6.5 2.5" transform="rotate(-75 7 7)"/></g><circle cx="7" cy="7.2" r="1.7" fill="#8a4514" stroke="#3a1a05" stroke-width="0.9"/></svg></div>
<div class="a" style="left:339px;top:656px;width:14px;height:14px;border-radius:4px;background:#e9792d"><svg width="14" height="14" viewBox="0 0 14 14"><g fill="none" stroke="#3a1a05" stroke-width="1.05"><circle cx="7" cy="7" r="4.3" stroke-dasharray="6.5 2.5" transform="rotate(-75 7 7)"/></g><circle cx="7" cy="7.2" r="1.7" fill="#8a4514" stroke="#3a1a05" stroke-width="0.9"/></svg></div>
<div class="a" style="left:357px;top:656px;width:14px;height:14px;border-radius:4px;background:#e9792d"><svg width="14" height="14" viewBox="0 0 14 14"><g fill="none" stroke="#3a1a05" stroke-width="1.05"><circle cx="7" cy="7" r="4.3" stroke-dasharray="6.5 2.5" transform="rotate(-75 7 7)"/></g><circle cx="7" cy="7.2" r="1.7" fill="#8a4514" stroke="#3a1a05" stroke-width="0.9"/></svg></div>
<div class="a" style="left:375px;top:656px;width:14px;height:14px;border-radius:4px;background:#1f4a17"><svg width="14" height="14" viewBox="0 0 14 14"><path d="M3.3,7.3 L5.9,9.7 L10.6,4.6" fill="none" stroke="#c8c8c8" stroke-width="1.05" stroke-linecap="round" stroke-linejoin="round"/></svg></div>
<div class="a" style="left:393px;top:656px;width:14px;height:14px;border-radius:4px;background:#e9792d"><svg width="14" height="14" viewBox="0 0 14 14"><g fill="none" stroke="#3a1a05" stroke-width="1.05"><circle cx="7" cy="7" r="4.3" stroke-dasharray="6.5 2.5" transform="rotate(-75 7 7)"/></g><circle cx="7" cy="7.2" r="1.7" fill="#8a4514" stroke="#3a1a05" stroke-width="0.9"/></svg></div>
<div class="a" style="left:411px;top:656px;width:14px;height:14px;border-radius:4px;background:#1f4a17"><svg width="14" height="14" viewBox="0 0 14 14"><path d="M3.3,7.3 L5.9,9.7 L10.6,4.6" fill="none" stroke="#c8c8c8" stroke-width="1.05" stroke-linecap="round" stroke-linejoin="round"/></svg></div>
<div class="a" style="left:429px;top:656px;width:14px;height:14px;border-radius:4px;background:#1f4a17"><svg width="14" height="14" viewBox="0 0 14 14"><path d="M3.3,7.3 L5.9,9.7 L10.6,4.6" fill="none" stroke="#c8c8c8" stroke-width="1.05" stroke-linecap="round" stroke-linejoin="round"/></svg></div>
<div class="a" style="left:447px;top:656px;width:14px;height:14px;border-radius:4px;background:#2a5a3d"><svg width="14" height="14" viewBox="0 0 14 14"><path d="M3.3,7.3 L5.9,9.7 L10.6,4.6" fill="none" stroke="#c4c8e8" stroke-width="1.05" stroke-linecap="round" stroke-linejoin="round"/></svg></div>
<div class="t" style="left:100px;top:676px;font-size:14px;color:#ececed;letter-spacing:0.15px">chain_t17</div>
<div class="a" style="left:92px;top:691px;width:178px;height:1px;background:#1c1c1f"></div>
<div class="a" style="left:285px;top:676px;width:14px;height:14px;border-radius:4px;background:#e9792d"><svg width="14" height="14" viewBox="0 0 14 14"><g fill="none" stroke="#3a1a05" stroke-width="1.05"><circle cx="7" cy="7" r="4.3" stroke-dasharray="6.5 2.5" transform="rotate(-75 7 7)"/></g><circle cx="7" cy="7.2" r="1.7" fill="#8a4514" stroke="#3a1a05" stroke-width="0.9"/></svg></div>
<div class="a" style="left:303px;top:676px;width:14px;height:14px;border-radius:4px;background:#1f4a17"><svg width="14" height="14" viewBox="0 0 14 14"><path d="M3.3,7.3 L5.9,9.7 L10.6,4.6" fill="none" stroke="#c8c8c8" stroke-width="1.05" stroke-linecap="round" stroke-linejoin="round"/></svg></div>
<div class="a" style="left:321px;top:676px;width:14px;height:14px;border-radius:4px;background:#e9792d"><svg width="14" height="14" viewBox="0 0 14 14"><g fill="none" stroke="#3a1a05" stroke-width="1.05"><circle cx="7" cy="7" r="4.3" stroke-dasharray="6.5 2.5" transform="rotate(-75 7 7)"/></g><circle cx="7" cy="7.2" r="1.7" fill="#8a4514" stroke="#3a1a05" stroke-width="0.9"/></svg></div>
<div class="a" style="left:339px;top:676px;width:14px;height:14px;border-radius:4px;background:#e9792d"><svg width="14" height="14" viewBox="0 0 14 14"><g fill="none" stroke="#3a1a05" stroke-width="1.05"><circle cx="7" cy="7" r="4.3" stroke-dasharray="6.5 2.5" transform="rotate(-75 7 7)"/></g><circle cx="7" cy="7.2" r="1.7" fill="#8a4514" stroke="#3a1a05" stroke-width="0.9"/></svg></div>
<div class="a" style="left:357px;top:676px;width:14px;height:14px;border-radius:4px;background:#e9792d"><svg width="14" height="14" viewBox="0 0 14 14"><g fill="none" stroke="#3a1a05" stroke-width="1.05"><circle cx="7" cy="7" r="4.3" stroke-dasharray="6.5 2.5" transform="rotate(-75 7 7)"/></g><circle cx="7" cy="7.2" r="1.7" fill="#8a4514" stroke="#3a1a05" stroke-width="0.9"/></svg></div>
<div class="a" style="left:375px;top:676px;width:14px;height:14px;border-radius:4px;background:#1f4a17"><svg width="14" height="14" viewBox="0 0 14 14"><path d="M3.3,7.3 L5.9,9.7 L10.6,4.6" fill="none" stroke="#c8c8c8" stroke-width="1.05" stroke-linecap="round" stroke-linejoin="round"/></svg></div>
<div class="a" style="left:393px;top:676px;width:14px;height:14px;border-radius:4px;background:#e9792d"><svg width="14" height="14" viewBox="0 0 14 14"><g fill="none" stroke="#3a1a05" stroke-width="1.05"><circle cx="7" cy="7" r="4.3" stroke-dasharray="6.5 2.5" transform="rotate(-75 7 7)"/></g><circle cx="7" cy="7.2" r="1.7" fill="#8a4514" stroke="#3a1a05" stroke-width="0.9"/></svg></div>
<div class="a" style="left:411px;top:676px;width:14px;height:14px;border-radius:4px;background:#1f4a17"><svg width="14" height="14" viewBox="0 0 14 14"><path d="M3.3,7.3 L5.9,9.7 L10.6,4.6" fill="none" stroke="#c8c8c8" stroke-width="1.05" stroke-linecap="round" stroke-linejoin="round"/></svg></div>
<div class="a" style="left:429px;top:676px;width:14px;height:14px;border-radius:4px;background:#1f4a17"><svg width="14" height="14" viewBox="0 0 14 14"><path d="M3.3,7.3 L5.9,9.7 L10.6,4.6" fill="none" stroke="#c8c8c8" stroke-width="1.05" stroke-linecap="round" stroke-linejoin="round"/></svg></div>
<div class="a" style="left:447px;top:676px;width:14px;height:14px;border-radius:4px;background:#2a5a3d"><svg width="14" height="14" viewBox="0 0 14 14"><path d="M3.3,7.3 L5.9,9.7 L10.6,4.6" fill="none" stroke="#c4c8e8" stroke-width="1.05" stroke-linecap="round" stroke-linejoin="round"/></svg></div>
<div class="t" style="left:100px;top:696px;font-size:14px;color:#ececed;letter-spacing:0.15px">empty_2</div>
<div class="a" style="left:92px;top:711px;width:178px;height:1px;background:#1c1c1f"></div>
<div class="a" style="left:285px;top:696px;width:14px;height:14px;border-radius:4px;background:#e9792d"><svg width="14" height="14" viewBox="0 0 14 14"><g fill="none" stroke="#3a1a05" stroke-width="1.05"><circle cx="7" cy="7" r="4.3" stroke-dasharray="6.5 2.5" transform="rotate(-75 7 7)"/></g><circle cx="7" cy="7.2" r="1.7" fill="#8a4514" stroke="#3a1a05" stroke-width="0.9"/></svg></div>
<div class="a" style="left:303px;top:696px;width:14px;height:14px;border-radius:4px;background:#1f4a17"><svg width="14" height="14" viewBox="0 0 14 14"><path d="M3.3,7.3 L5.9,9.7 L10.6,4.6" fill="none" stroke="#c8c8c8" stroke-width="1.05" stroke-linecap="round" stroke-linejoin="round"/></svg></div>
<div class="a" style="left:321px;top:696px;width:14px;height:14px;border-radius:4px;background:#e9792d"><svg width="14" height="14" viewBox="0 0 14 14"><g fill="none" stroke="#3a1a05" stroke-width="1.05"><circle cx="7" cy="7" r="4.3" stroke-dasharray="6.5 2.5" transform="rotate(-75 7 7)"/></g><circle cx="7" cy="7.2" r="1.7" fill="#8a4514" stroke="#3a1a05" stroke-width="0.9"/></svg></div>
<div class="a" style="left:339px;top:696px;width:14px;height:14px;border-radius:4px;background:#e9792d"><svg width="14" height="14" viewBox="0 0 14 14"><g fill="none" stroke="#3a1a05" stroke-width="1.05"><circle cx="7" cy="7" r="4.3" stroke-dasharray="6.5 2.5" transform="rotate(-75 7 7)"/></g><circle cx="7" cy="7.2" r="1.7" fill="#8a4514" stroke="#3a1a05" stroke-width="0.9"/></svg></div>
<div class="a" style="left:357px;top:696px;width:14px;height:14px;border-radius:4px;background:#e9792d"><svg width="14" height="14" viewBox="0 0 14 14"><g fill="none" stroke="#3a1a05" stroke-width="1.05"><circle cx="7" cy="7" r="4.3" stroke-dasharray="6.5 2.5" transform="rotate(-75 7 7)"/></g><circle cx="7" cy="7.2" r="1.7" fill="#8a4514" stroke="#3a1a05" stroke-width="0.9"/></svg></div>
<div class="a" style="left:375px;top:696px;width:14px;height:14px;border-radius:4px;background:#1f4a17"><svg width="14" height="14" viewBox="0 0 14 14"><path d="M3.3,7.3 L5.9,9.7 L10.6,4.6" fill="none" stroke="#c8c8c8" stroke-width="1.05" stroke-linecap="round" stroke-linejoin="round"/></svg></div>
<div class="a" style="left:393px;top:696px;width:14px;height:14px;border-radius:4px;background:#e9792d"><svg width="14" height="14" viewBox="0 0 14 14"><g fill="none" stroke="#3a1a05" stroke-width="1.05"><circle cx="7" cy="7" r="4.3" stroke-dasharray="6.5 2.5" transform="rotate(-75 7 7)"/></g><circle cx="7" cy="7.2" r="1.7" fill="#8a4514" stroke="#3a1a05" stroke-width="0.9"/></svg></div>
<div class="a" style="left:411px;top:696px;width:14px;height:14px;border-radius:4px;background:#1f4a17"><svg width="14" height="14" viewBox="0 0 14 14"><path d="M3.3,7.3 L5.9,9.7 L10.6,4.6" fill="none" stroke="#c8c8c8" stroke-width="1.05" stroke-linecap="round" stroke-linejoin="round"/></svg></div>
<div class="a" style="left:429px;top:696px;width:14px;height:14px;border-radius:4px;background:#1f4a17"><svg width="14" height="14" viewBox="0 0 14 14"><path d="M3.3,7.3 L5.9,9.7 L10.6,4.6" fill="none" stroke="#c8c8c8" stroke-width="1.05" stroke-linecap="round" stroke-linejoin="round"/></svg></div>
<div class="a" style="left:447px;top:696px;width:14px;height:14px;border-radius:4px;background:#2a5a3d"><svg width="14" height="14" viewBox="0 0 14 14"><path d="M3.3,7.3 L5.9,9.7 L10.6,4.6" fill="none" stroke="#c4c8e8" stroke-width="1.05" stroke-linecap="round" stroke-linejoin="round"/></svg></div>
<div class="t" style="left:100px;top:716px;font-size:14px;color:#ececed;letter-spacing:0.15px">chain_t18</div>
<div class="a" style="left:92px;top:731px;width:178px;height:1px;background:#1c1c1f"></div>
<div class="a" style="left:285px;top:716px;width:14px;height:14px;border-radius:4px;background:#e9792d"><svg width="14" height="14" viewBox="0 0 14 14"><g fill="none" stroke="#3a1a05" stroke-width="1.05"><circle cx="7" cy="7" r="4.3" stroke-dasharray="6.5 2.5" transform="rotate(-75 7 7)"/></g><circle cx="7" cy="7.2" r="1.7" fill="#8a4514" stroke="#3a1a05" stroke-width="0.9"/></svg></div>
<div class="a" style="left:303px;top:716px;width:14px;height:14px;border-radius:4px;background:#1f4a17"><svg width="14" height="14" viewBox="0 0 14 14"><path d="M3.3,7.3 L5.9,9.7 L10.6,4.6" fill="none" stroke="#c8c8c8" stroke-width="1.05" stroke-linecap="round" stroke-linejoin="round"/></svg></div>
<div class="a" style="left:321px;top:716px;width:14px;height:14px;border-radius:4px;background:#e9792d"><svg width="14" height="14" viewBox="0 0 14 14"><g fill="none" stroke="#3a1a05" stroke-width="1.05"><circle cx="7" cy="7" r="4.3" stroke-dasharray="6.5 2.5" transform="rotate(-75 7 7)"/></g><circle cx="7" cy="7.2" r="1.7" fill="#8a4514" stroke="#3a1a05" stroke-width="0.9"/></svg></div>
<div class="a" style="left:339px;top:716px;width:14px;height:14px;border-radius:4px;background:#e9792d"><svg width="14" height="14" viewBox="0 0 14 14"><g fill="none" stroke="#3a1a05" stroke-width="1.05"><circle cx="7" cy="7" r="4.3" stroke-dasharray="6.5 2.5" transform="rotate(-75 7 7)"/></g><circle cx="7" cy="7.2" r="1.7" fill="#8a4514" stroke="#3a1a05" stroke-width="0.9"/></svg></div>
<div class="a" style="left:357px;top:716px;width:14px;height:14px;border-radius:4px;background:#e9792d"><svg width="14" height="14" viewBox="0 0 14 14"><g fill="none" stroke="#3a1a05" stroke-width="1.05"><circle cx="7" cy="7" r="4.3" stroke-dasharray="6.5 2.5" transform="rotate(-75 7 7)"/></g><circle cx="7" cy="7.2" r="1.7" fill="#8a4514" stroke="#3a1a05" stroke-width="0.9"/></svg></div>
<div class="a" style="left:375px;top:716px;width:14px;height:14px;border-radius:4px;background:#1f4a17"><svg width="14" height="14" viewBox="0 0 14 14"><path d="M3.3,7.3 L5.9,9.7 L10.6,4.6" fill="none" stroke="#c8c8c8" stroke-width="1.05" stroke-linecap="round" stroke-linejoin="round"/></svg></div>
<div class="a" style="left:393px;top:716px;width:14px;height:14px;border-radius:4px;background:#e9792d"><svg width="14" height="14" viewBox="0 0 14 14"><g fill="none" stroke="#3a1a05" stroke-width="1.05"><circle cx="7" cy="7" r="4.3" stroke-dasharray="6.5 2.5" transform="rotate(-75 7 7)"/></g><circle cx="7" cy="7.2" r="1.7" fill="#8a4514" stroke="#3a1a05" stroke-width="0.9"/></svg></div>
<div class="a" style="left:411px;top:716px;width:14px;height:14px;border-radius:4px;background:#1f4a17"><svg width="14" height="14" viewBox="0 0 14 14"><path d="M3.3,7.3 L5.9,9.7 L10.6,4.6" fill="none" stroke="#c8c8c8" stroke-width="1.05" stroke-linecap="round" stroke-linejoin="round"/></svg></div>
<div class="a" style="left:429px;top:716px;width:14px;height:14px;border-radius:4px;background:#1f4a17"><svg width="14" height="14" viewBox="0 0 14 14"><path d="M3.3,7.3 L5.9,9.7 L10.6,4.6" fill="none" stroke="#c8c8c8" stroke-width="1.05" stroke-linecap="round" stroke-linejoin="round"/></svg></div>
<div class="a" style="left:447px;top:716px;width:14px;height:14px;border-radius:4px;background:#2a5a3d"><svg width="14" height="14" viewBox="0 0 14 14"><path d="M3.3,7.3 L5.9,9.7 L10.6,4.6" fill="none" stroke="#c4c8e8" stroke-width="1.05" stroke-linecap="round" stroke-linejoin="round"/></svg></div>
<div class="t" style="left:100px;top:736px;font-size:14px;color:#ececed;letter-spacing:0.15px">chain_t19</div>
<div class="a" style="left:92px;top:751px;width:178px;height:1px;background:#1c1c1f"></div>
<div class="a" style="left:285px;top:736px;width:14px;height:14px;border-radius:4px;background:#e9792d"><svg width="14" height="14" viewBox="0 0 14 14"><g fill="none" stroke="#3a1a05" stroke-width="1.05"><circle cx="7" cy="7" r="4.3" stroke-dasharray="6.5 2.5" transform="rotate(-75 7 7)"/></g><circle cx="7" cy="7.2" r="1.7" fill="#8a4514" stroke="#3a1a05" stroke-width="0.9"/></svg></div>
<div class="a" style="left:303px;top:736px;width:14px;height:14px;border-radius:4px;background:#1f4a17"><svg width="14" height="14" viewBox="0 0 14 14"><path d="M3.3,7.3 L5.9,9.7 L10.6,4.6" fill="none" stroke="#c8c8c8" stroke-width="1.05" stroke-linecap="round" stroke-linejoin="round"/></svg></div>
<div class="a" style="left:321px;top:736px;width:14px;height:14px;border-radius:4px;background:#e9792d"><svg width="14" height="14" viewBox="0 0 14 14"><g fill="none" stroke="#3a1a05" stroke-width="1.05"><circle cx="7" cy="7" r="4.3" stroke-dasharray="6.5 2.5" transform="rotate(-75 7 7)"/></g><circle cx="7" cy="7.2" r="1.7" fill="#8a4514" stroke="#3a1a05" stroke-width="0.9"/></svg></div>
<div class="a" style="left:339px;top:736px;width:14px;height:14px;border-radius:4px;background:#e9792d"><svg width="14" height="14" viewBox="0 0 14 14"><g fill="none" stroke="#3a1a05" stroke-width="1.05"><circle cx="7" cy="7" r="4.3" stroke-dasharray="6.5 2.5" transform="rotate(-75 7 7)"/></g><circle cx="7" cy="7.2" r="1.7" fill="#8a4514" stroke="#3a1a05" stroke-width="0.9"/></svg></div>
<div class="a" style="left:357px;top:736px;width:14px;height:14px;border-radius:4px;background:#e9792d"><svg width="14" height="14" viewBox="0 0 14 14"><g fill="none" stroke="#3a1a05" stroke-width="1.05"><circle cx="7" cy="7" r="4.3" stroke-dasharray="6.5 2.5" transform="rotate(-75 7 7)"/></g><circle cx="7" cy="7.2" r="1.7" fill="#8a4514" stroke="#3a1a05" stroke-width="0.9"/></svg></div>
<div class="a" style="left:375px;top:736px;width:14px;height:14px;border-radius:4px;background:#1f4a17"><svg width="14" height="14" viewBox="0 0 14 14"><path d="M3.3,7.3 L5.9,9.7 L10.6,4.6" fill="none" stroke="#c8c8c8" stroke-width="1.05" stroke-linecap="round" stroke-linejoin="round"/></svg></div>
<div class="a" style="left:393px;top:736px;width:14px;height:14px;border-radius:4px;background:#e9792d"><svg width="14" height="14" viewBox="0 0 14 14"><g fill="none" stroke="#3a1a05" stroke-width="1.05"><circle cx="7" cy="7" r="4.3" stroke-dasharray="6.5 2.5" transform="rotate(-75 7 7)"/></g><circle cx="7" cy="7.2" r="1.7" fill="#8a4514" stroke="#3a1a05" stroke-width="0.9"/></svg></div>
<div class="a" style="left:411px;top:736px;width:14px;height:14px;border-radius:4px;background:#1f4a17"><svg width="14" height="14" viewBox="0 0 14 14"><path d="M3.3,7.3 L5.9,9.7 L10.6,4.6" fill="none" stroke="#c8c8c8" stroke-width="1.05" stroke-linecap="round" stroke-linejoin="round"/></svg></div>
<div class="a" style="left:429px;top:736px;width:14px;height:14px;border-radius:4px;background:#1f4a17"><svg width="14" height="14" viewBox="0 0 14 14"><path d="M3.3,7.3 L5.9,9.7 L10.6,4.6" fill="none" stroke="#c8c8c8" stroke-width="1.05" stroke-linecap="round" stroke-linejoin="round"/></svg></div>
<div class="a" style="left:447px;top:736px;width:14px;height:14px;border-radius:4px;background:#2a5a3d"><svg width="14" height="14" viewBox="0 0 14 14"><path d="M3.3,7.3 L5.9,9.7 L10.6,4.6" fill="none" stroke="#c4c8e8" stroke-width="1.05" stroke-linecap="round" stroke-linejoin="round"/></svg></div>
<div class="t" style="left:100px;top:756px;font-size:14px;color:#ececed;letter-spacing:0.15px">end_chain</div>
<div class="a" style="left:92px;top:771px;width:178px;height:1px;background:#1c1c1f"></div>
<div class="a" style="left:285px;top:756px;width:14px;height:14px;border-radius:4px;background:#e9792d"><svg width="14" height="14" viewBox="0 0 14 14"><g fill="none" stroke="#3a1a05" stroke-width="1.05"><circle cx="7" cy="7" r="4.3" stroke-dasharray="6.5 2.5" transform="rotate(-75 7 7)"/></g><circle cx="7" cy="7.2" r="1.7" fill="#8a4514" stroke="#3a1a05" stroke-width="0.9"/></svg></div>
<div class="a" style="left:303px;top:756px;width:14px;height:14px;border-radius:4px;background:#1f4a17"><svg width="14" height="14" viewBox="0 0 14 14"><path d="M3.3,7.3 L5.9,9.7 L10.6,4.6" fill="none" stroke="#c8c8c8" stroke-width="1.05" stroke-linecap="round" stroke-linejoin="round"/></svg></div>
<div class="a" style="left:321px;top:756px;width:14px;height:14px;border-radius:4px;background:#e9792d"><svg width="14" height="14" viewBox="0 0 14 14"><g fill="none" stroke="#3a1a05" stroke-width="1.05"><circle cx="7" cy="7" r="4.3" stroke-dasharray="6.5 2.5" transform="rotate(-75 7 7)"/></g><circle cx="7" cy="7.2" r="1.7" fill="#8a4514" stroke="#3a1a05" stroke-width="0.9"/></svg></div>
<div class="a" style="left:339px;top:756px;width:14px;height:14px;border-radius:4px;background:#e9792d"><svg width="14" height="14" viewBox="0 0 14 14"><g fill="none" stroke="#3a1a05" stroke-width="1.05"><circle cx="7" cy="7" r="4.3" stroke-dasharray="6.5 2.5" transform="rotate(-75 7 7)"/></g><circle cx="7" cy="7.2" r="1.7" fill="#8a4514" stroke="#3a1a05" stroke-width="0.9"/></svg></div>
<div class="a" style="left:357px;top:756px;width:14px;height:14px;border-radius:4px;background:#e9792d"><svg width="14" height="14" viewBox="0 0 14 14"><g fill="none" stroke="#3a1a05" stroke-width="1.05"><circle cx="7" cy="7" r="4.3" stroke-dasharray="6.5 2.5" transform="rotate(-75 7 7)"/></g><circle cx="7" cy="7.2" r="1.7" fill="#8a4514" stroke="#3a1a05" stroke-width="0.9"/></svg></div>
<div class="a" style="left:375px;top:756px;width:14px;height:14px;border-radius:4px;background:#1f4a17"><svg width="14" height="14" viewBox="0 0 14 14"><path d="M3.3,7.3 L5.9,9.7 L10.6,4.6" fill="none" stroke="#c8c8c8" stroke-width="1.05" stroke-linecap="round" stroke-linejoin="round"/></svg></div>
<div class="a" style="left:393px;top:756px;width:14px;height:14px;border-radius:4px;background:#e9792d"><svg width="14" height="14" viewBox="0 0 14 14"><g fill="none" stroke="#3a1a05" stroke-width="1.05"><circle cx="7" cy="7" r="4.3" stroke-dasharray="6.5 2.5" transform="rotate(-75 7 7)"/></g><circle cx="7" cy="7.2" r="1.7" fill="#8a4514" stroke="#3a1a05" stroke-width="0.9"/></svg></div>
<div class="a" style="left:411px;top:756px;width:14px;height:14px;border-radius:4px;background:#1f4a17"><svg width="14" height="14" viewBox="0 0 14 14"><path d="M3.3,7.3 L5.9,9.7 L10.6,4.6" fill="none" stroke="#c8c8c8" stroke-width="1.05" stroke-linecap="round" stroke-linejoin="round"/></svg></div>
<div class="a" style="left:429px;top:756px;width:14px;height:14px;border-radius:4px;background:#1f4a17"><svg width="14" height="14" viewBox="0 0 14 14"><path d="M3.3,7.3 L5.9,9.7 L10.6,4.6" fill="none" stroke="#c8c8c8" stroke-width="1.05" stroke-linecap="round" stroke-linejoin="round"/></svg></div>
<div class="a" style="left:447px;top:756px;width:14px;height:14px;border-radius:4px;background:#2a5a3d"><svg width="14" height="14" viewBox="0 0 14 14"><path d="M3.3,7.3 L5.9,9.7 L10.6,4.6" fill="none" stroke="#c4c8e8" stroke-width="1.05" stroke-linecap="round" stroke-linejoin="round"/></svg></div>
<div class="a" style="left:471px;top:62px;width:2px;height:1176px;background:#6b6c75"></div>
<div class="a" style="left:481px;top:62px;width:1427px;height:132px;border-radius:8px;border:1px solid #27272a"></div>
<svg class="a" style="left:492px;top:81px" width="16" height="20" viewBox="0 0 16 20"><g fill="#ececed"><rect x="2" y="12" width="2" height="6" rx="1"/><rect x="7" y="7" width="2" height="11" rx="1"/><rect x="12" y="2" width="2" height="16" rx="1"/></g></svg>
<div class="t" style="left:518px;top:82px;font-size:18px;font-weight:700;color:#fafafa;letter-spacing:0.2px">2025-04-21, 13:11:17</div>
<div class="a" style="left:713px;top:79px;width:88px;height:24px;border-radius:12px;background:#2c741c"></div>
<svg class="a" style="left:721px;top:85px" width="13" height="11" viewBox="0 0 13 11"><path d="M1.5,5.5 L4.8,9 L11.5,1.8" fill="none" stroke="#fff" stroke-width="1.5" stroke-linecap="round" stroke-linejoin="round"/></svg>
<div class="t" style="left:739px;top:84px;font-size:14.5px;color:#fff;letter-spacing:0.05px">success</div>
<div class="a" style="left:1476px;top:71px;width:133px;height:40px;border-radius:6px;border:1px solid #27272a"></div>
<svg class="a" style="left:1493px;top:81px" width="20" height="20" viewBox="0 0 20 20"><path d="M2,3 H18 V14 H7 L3.5,17 V14 H2 Z" fill="none" stroke="#f4f4f5" stroke-width="1.6" stroke-linejoin="round"/></svg>
<div class="t" style="left:1521px;top:84px;font-size:14px;font-weight:500;color:#ececed;letter-spacing:0.2px">Add a note</div>
<div class="a" style="left:1613px;top:71px;width:126px;height:40px;border-radius:6px;border:1px solid #27272a"></div>
<svg class="a" style="left:1632px;top:83px" width="16" height="16" viewBox="0 0 16 16"><g fill="none" stroke="#f4f4f5" stroke-width="1.8" stroke-linecap="round"><path d="M13.5,8 A5.5,5.5 0 1 1 11.5,3.8"/><path d="M12.5,1 V4.5 H9" stroke-linejoin="round"/></g></svg>
<div class="t" style="left:1658px;top:84px;font-size:14px;font-weight:500;color:#ececed;letter-spacing:0.2px">Clear Run</div>
<div class="a" style="left:1743px;top:71px;width:156px;height:40px;border-radius:6px;border:1px solid #27272a"></div>
<svg class="a" style="left:1866px;top:87px" width="11" height="7" viewBox="0 0 11 7"><path d="M1,1 H10 L5.5,6 Z" fill="#f4f4f5"/></svg>
<div class="t" style="left:1760px;top:84px;font-size:14px;font-weight:500;color:#ececed;letter-spacing:0.2px">Mark Run as...</div>
<div class="t" style="left:490px;top:128px;font-size:12px;font-weight:700;color:#a1a1aa;letter-spacing:0px">Logical Date</div>
<div class="t" style="left:490px;top:158px;font-size:16px;color:#ececed">2025-04-21, 13:11:17</div>
<div class="t" style="left:789px;top:128px;font-size:12px;font-weight:700;color:#a1a1aa;letter-spacing:0px">Run Type</div>
<div class="t" style="left:1012px;top:128px;font-size:12px;font-weight:700;color:#a1a1aa;letter-spacing:0px">Start</div>
<div class="t" style="left:1012px;top:158px;font-size:16px;color:#ececed">2025-04-21, 13:11:19</div>
<div class="t" style="left:1313px;top:128px;font-size:12px;font-weight:700;color:#a1a1aa;letter-spacing:0px">End</div>
<div class="t" style="left:1313px;top:158px;font-size:16px;color:#ececed">2025-04-21, 13:11:27</div>
<div class="t" style="left:1614px;top:128px;font-size:12px;font-weight:700;color:#a1a1aa;letter-spacing:0px">Duration</div>
<div class="t" style="left:1614px;top:158px;font-size:16px;color:#ececed">8.20s</div>
<div class="t" style="left:1811px;top:128px;font-size:12px;font-weight:700;color:#a1a1aa;letter-spacing:0.25px">Dag Version(s)</div>
<svg class="a" style="left:793px;top:160.5px" width="9" height="11" viewBox="0 0 9 11"><path d="M0.5,0.5 L8.5,5.5 L0.5,10.5 Z" fill="#f4f4f5"/></svg>
<div class="t" style="left:813px;top:158px;font-size:16px;color:#ececed">manual</div>
<div class="t" style="left:1811px;top:158px;font-size:14px;color:#ececed">v1</div>
<div class="a" style="left:473px;top:238px;width:1434px;height:1px;background:#27272a"></div>
<div class="t" style="left:489px;top:212px;font-size:16px;font-weight:700;color:#a1a1aa;letter-spacing:0.15px">Task Instances</div>
<div class="t" style="left:636px;top:212px;font-size:16px;font-weight:700;color:#a1a1aa;letter-spacing:0.15px">Events</div>
<div class="t" style="left:720px;top:212px;font-size:16px;font-weight:700;color:#a1a1aa;letter-spacing:0.15px">Code</div>
<div class="t" style="left:793px;top:212px;font-size:16px;font-weight:700;color:#fafafa;letter-spacing:0.15px">Details</div>
<div class="a" style="left:777px;top:237px;width:86px;height:3px;background:#6d9cf2"></div>
<div class="a" style="left:489px;top:255px;width:1403px;height:47px;background:#18181b;border-bottom:1px solid #27272a"></div>
<div class="t" style="left:501px;top:271.8px;font-size:14px;color:#ececed;letter-spacing:0.28px">State</div>
<div class="a" style="left:489px;top:302px;width:1403px;height:56px;background:#0e0e0e;border-bottom:1px solid #27272a"></div>
<div class="t" style="left:501px;top:323.3px;font-size:14px;color:#ececed;letter-spacing:0.28px">Run ID</div>
<div class="a" style="left:489px;top:358px;width:1403px;height:45.5px;background:#18181b;border-bottom:1px solid #27272a"></div>
<div class="t" style="left:501px;top:374.1px;font-size:14px;color:#ececed;letter-spacing:0.28px">Run Type</div>
<div class="a" style="left:489px;top:403.5px;width:1403px;height:45.0px;background:#0e0e0e;border-bottom:1px solid #27272a"></div>
<div class="t" style="left:501px;top:419.3px;font-size:14px;color:#ececed;letter-spacing:0.28px">Run Duration</div>
<div class="a" style="left:489px;top:448.5px;width:1403px;height:45.0px;background:#18181b;border-bottom:1px solid #27272a"></div>
<div class="t" style="left:501px;top:464.3px;font-size:14px;color:#ececed;letter-spacing:0.28px">Last Scheduling Decision</div>
<div class="a" style="left:489px;top:493.5px;width:1403px;height:44.799999999999955px;background:#0e0e0e;border-bottom:1px solid #27272a"></div>
<div class="t" style="left:501px;top:509.2px;font-size:14px;color:#ececed;letter-spacing:0.28px">Queued at</div>
<div class="a" style="left:489px;top:538.3px;width:1403px;height:45.0px;background:#18181b;border-bottom:1px solid #27272a"></div>
<div class="t" style="left:501px;top:554.1px;font-size:14px;color:#ececed;letter-spacing:0.28px">Start Date</div>
<div class="a" style="left:489px;top:583.3px;width:1403px;height:45.0px;background:#0e0e0e;border-bottom:1px solid #27272a"></div>
<div class="t" style="left:501px;top:599.1px;font-size:14px;color:#ececed;letter-spacing:0.28px">End Date</div>
<div class="a" style="left:489px;top:628.3px;width:1403px;height:45.0px;background:#18181b;border-bottom:1px solid #27272a"></div>
<div class="t" style="left:501px;top:644.1px;font-size:14px;color:#ececed;letter-spacing:0.28px">Data Interval Start</div>
<div class="a" style="left:489px;top:673.3px;width:1403px;height:45.0px;background:#0e0e0e;border-bottom:1px solid #27272a"></div>
<div class="t" style="left:501px;top:689.1px;font-size:14px;color:#ececed;letter-spacing:0.28px">Data Interval End</div>
<div class="a" style="left:489px;top:718.3px;width:1403px;height:45.200000000000045px;background:#18181b;border-bottom:1px solid #27272a"></div>
<div class="t" style="left:501px;top:734.2px;font-size:14px;color:#ececed;letter-spacing:0.28px">Trigger Source</div>
<div class="a" style="left:489px;top:763.5px;width:1403px;height:160.5px;background:#0e0e0e;border-bottom:1px solid #27272a"></div>
<div class="t" style="left:501px;top:837.0px;font-size:14px;color:#ececed;letter-spacing:0.28px">Dag Version(s)</div>
<div class="a" style="left:489px;top:924px;width:1403px;height:57.5px;background:#18181b;border-bottom:1px solid #27272a"></div>
<div class="t" style="left:501px;top:946.0px;font-size:14px;color:#ececed;letter-spacing:0.28px">Run Config</div>
<div class="a" style="left:909px;top:267px;width:22px;height:22px;border-radius:11px;background:#2c741c"></div>
<svg class="a" style="left:913px;top:271px" width="14" height="14" viewBox="0 0 14 14"><path d="M3,7.3 L5.8,10 L11,4" fill="none" stroke="#fff" stroke-width="1.7" stroke-linecap="round" stroke-linejoin="round"/></svg>
<div class="t" style="left:935px;top:270px;font-size:14.5px;color:#ececed">success</div>
<div class="t" style="left:909px;top:323.3px;font-size:14px;color:#ececed;letter-spacing:0.75px">manual__2025-04-21T17:11:18.116174+00:00</div>
<div class="a" style="left:1234px;top:314px;width:32px;height:32px;border-radius:4px;background:#18181b"></div>
<svg class="a" style="left:1243px;top:322px" width="14" height="16" viewBox="0 0 14 16"><g fill="none" stroke="#ececed" stroke-width="1.5" stroke-linejoin="round"><rect x="1.5" y="2.5" width="11" height="12.5" rx="1.5"/><rect x="4.5" y="0.8" width="5" height="3" rx="0.8"/></g></svg>
<svg class="a" style="left:912px;top:376px" width="8" height="10" viewBox="0 0 8 10"><path d="M0.5,0.5 L7.5,5 L0.5,9.5 Z" fill="#ececed"/></svg>
<div class="t" style="left:931px;top:374.1px;font-size:14px;color:#ececed;letter-spacing:0.25px">manual</div>
<div class="t" style="left:909px;top:419.3px;font-size:14px;color:#ececed;letter-spacing:0.8px">8.20s</div>
<div class="t" style="left:909px;top:464.3px;font-size:14px;color:#ececed;letter-spacing:0.8px">2025-04-21, 13:11:27</div>
<div class="t" style="left:909px;top:509.2px;font-size:14px;color:#ececed;letter-spacing:0.8px">2025-04-21, 13:11:18</div>
<div class="t" style="left:909px;top:554.1px;font-size:14px;color:#ececed;letter-spacing:0.8px">2025-04-21, 13:11:19</div>
<div class="t" style="left:909px;top:599.1px;font-size:14px;color:#ececed;letter-spacing:0.8px">2025-04-21, 13:11:27</div>
<div class="t" style="left:909px;top:644.1px;font-size:14px;color:#ececed;letter-spacing:0.8px">2025-04-21, 13:11:17</div>
<div class="t" style="left:909px;top:689.1px;font-size:14px;color:#ececed;letter-spacing:0.8px">2025-04-21, 13:11:17</div>
<div class="t" style="left:909px;top:734.2px;font-size:14px;color:#ececed;">rest_api</div>
<div class="a" style="left:909px;top:775.8px;width:971px;height:45.200000000000045px;background:#18181b;border-bottom:1px solid #27272a"></div>
<div class="t" style="left:921px;top:791.5px;font-size:14px;color:#ececed;letter-spacing:0.15px">Version ID</div>
<div class="t" style="left:1170px;top:791.5px;font-size:14px;color:#ececed;letter-spacing:0.9px">0196594d-4412-7142-8109-3fa5abb24078</div>
<div class="a" style="left:909px;top:821px;width:971px;height:45.299999999999955px;background:#0e0e0e;border-bottom:1px solid #27272a"></div>
<div class="t" style="left:921px;top:836.8px;font-size:14px;color:#ececed;letter-spacing:0.15px">Bundle Name</div>
<div class="t" style="left:1170px;top:836.8px;font-size:14px;color:#ececed;letter-spacing:0.3px">dags-folder</div>
<div class="a" style="left:909px;top:866.3px;width:971px;height:45.700000000000045px;background:#18181b;border-bottom:1px solid #27272a"></div>
<div class="t" style="left:921px;top:882.2px;font-size:14px;color:#ececed;letter-spacing:0.15px">Created At</div>
<div class="t" style="left:1170px;top:882.2px;font-size:14px;color:#ececed;letter-spacing:0.8px">2025-04-21, 13:02:38</div>
<svg class="a" style="left:910px;top:940px" width="7" height="10" viewBox="0 0 7 10"><path d="M0.5,0.5 L6.5,5 L0.5,9.5 Z" fill="#a27ef0"/></svg>
<div class="t" style="left:927px;top:940px;font-size:14px;font-weight:700;font-family:'Liberation Mono',monospace;color:#fff;letter-spacing:-1px">{}</div>
<div class="t" style="left:952px;top:940px;font-size:14px;font-style:italic;font-family:'Liberation Mono',monospace;color:#9a9680">0 items</div>
<svg class="a" style="left:1027px;top:945px" width="14" height="16" viewBox="0 0 14 16"><g fill="none" stroke="#ececed" stroke-width="1.5" stroke-linejoin="round"><rect x="1.5" y="2.5" width="11" height="12.5" rx="1.5"/><rect x="4.5" y="0.8" width="5" height="3" rx="0.8"/></g></svg>
<div class="a" style="left:0;top:0;width:1919px;height:1px;background:#f0f0f0"></div>
</div></body></html>
